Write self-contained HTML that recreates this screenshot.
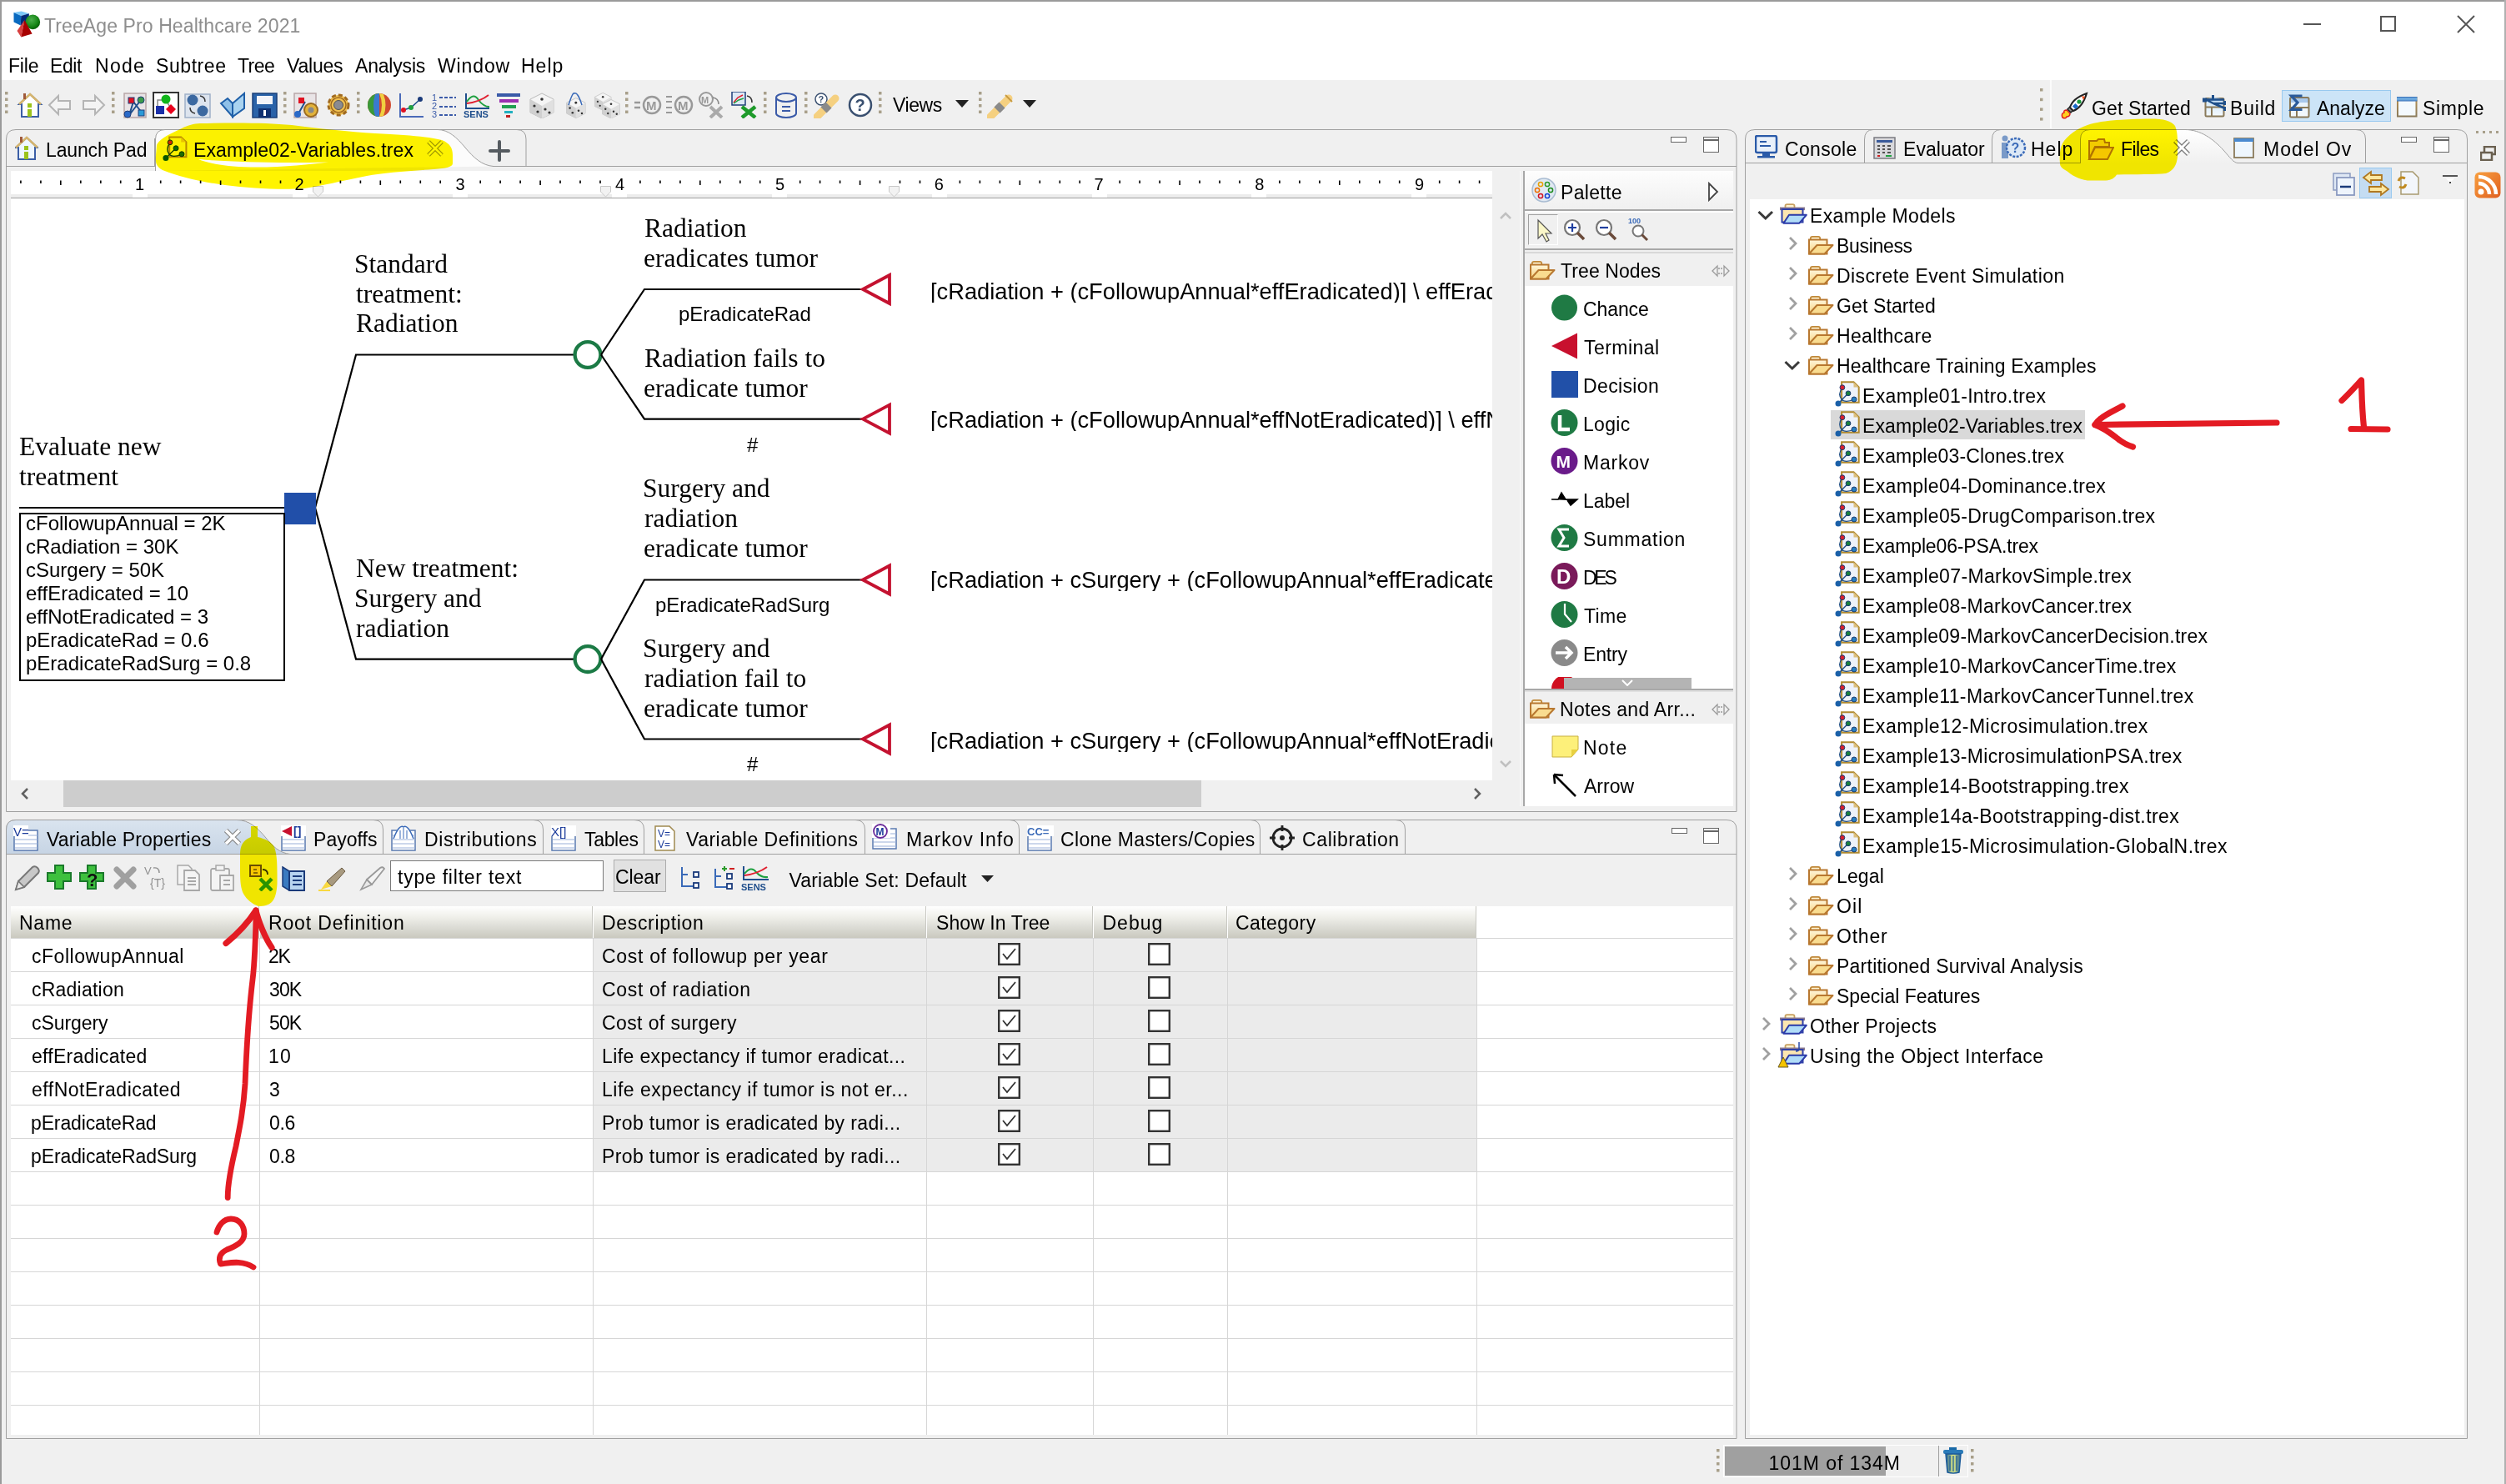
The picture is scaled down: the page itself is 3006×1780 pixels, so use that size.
<!DOCTYPE html><html><head><meta charset="utf-8"><style>
html,body{margin:0;padding:0;}
body{width:3006px;height:1780px;overflow:hidden;position:relative;background:#f0f0f0;font-family:"Liberation Sans", sans-serif;}
.t{position:absolute;white-space:pre;}
.r{position:absolute;}
</style></head><body>
<div class="r" style="left:0px;top:0px;width:3006px;height:96px;background:#fff;"></div>
<div class="r" style="left:0px;top:0px;width:3006px;height:1.5px;background:#9a9a9a;"></div>
<div class="r" style="left:0px;top:0px;width:2px;height:1780px;background:#9a9a9a;"></div>
<div class="r" style="left:3004px;top:0px;width:2px;height:1780px;background:#b0b0b0;"></div>
<div class="t" style="left:53.0px;top:20.3px;font-size:23px;line-height:23px;color:#8e8e8e;letter-spacing:0.10px;">TreeAge Pro Healthcare 2021</div>
<svg class="r" style="left:0px;top:0px;" width="60" height="50" viewBox="0 0 60 50"><defs><radialGradient id="sph" cx="0.4" cy="0.35" r="0.7"><stop offset="0" stop-color="#4cae4c"/><stop offset="0.6" stop-color="#1a8a1a"/><stop offset="1" stop-color="#005a00"/></radialGradient></defs><polygon points="16.5,15.1 25.6,13.4 34.9,16.2 25.3,19" fill="#7cc8f8"/><polygon points="16.5,15.1 25.3,19 24.7,30.6 16.5,26.4" fill="#0a6ac0"/><polygon points="25.3,19 34.9,16.2 34.6,25 24.7,30.6" fill="#002a78"/><circle cx="39.3" cy="26.4" r="8.8" fill="url(#sph)"/><polygon points="29.5,24.1 20.5,37.1 25.3,44.5" fill="#d84040"/><polygon points="29.5,24.1 25.3,44.5 38.6,40.5" fill="#a80000"/></svg>
<div class="r" style="left:2763px;top:28px;width:21px;height:2px;background:#555;"></div>
<div class="r" style="left:2855px;top:19px;width:19px;height:19px;border:2px solid #555;box-sizing:border-box;"></div>
<svg class="r" style="left:2946px;top:17px;" width="24" height="24" viewBox="0 0 24 24"><path d="M2 2 L22 22 M22 2 L2 22" stroke="#555" stroke-width="2"/></svg>
<div class="t" style="left:10.0px;top:68.3px;font-size:23px;line-height:23px;color:#000;letter-spacing:-0.19px;">File</div>
<div class="t" style="left:60.0px;top:68.3px;font-size:23px;line-height:23px;color:#000;letter-spacing:-0.45px;">Edit</div>
<div class="t" style="left:114.0px;top:68.3px;font-size:23px;line-height:23px;color:#000;letter-spacing:1.27px;">Node</div>
<div class="t" style="left:187.0px;top:68.3px;font-size:23px;line-height:23px;color:#000;letter-spacing:0.57px;">Subtree</div>
<div class="t" style="left:285.0px;top:68.3px;font-size:23px;line-height:23px;color:#000;letter-spacing:-0.58px;">Tree</div>
<div class="t" style="left:344.0px;top:68.3px;font-size:23px;line-height:23px;color:#000;letter-spacing:-0.22px;">Values</div>
<div class="t" style="left:426.0px;top:68.3px;font-size:23px;line-height:23px;color:#000;letter-spacing:-0.19px;">Analysis</div>
<div class="t" style="left:525.0px;top:68.3px;font-size:23px;line-height:23px;color:#000;letter-spacing:0.88px;">Window</div>
<div class="t" style="left:625.0px;top:68.3px;font-size:23px;line-height:23px;color:#000;letter-spacing:1.00px;">Help</div>
<!--TOOLBAR-->
<svg class="r" style="left:6px;top:110px;" width="4" height="34" viewBox="0 0 4 34"><rect x="0" y="0.0" width="3.5" height="3.5" fill="#a89f8a"/><rect x="0" y="7.5" width="3.5" height="3.5" fill="#a89f8a"/><rect x="0" y="15.0" width="3.5" height="3.5" fill="#a89f8a"/><rect x="0" y="22.5" width="3.5" height="3.5" fill="#a89f8a"/></svg>
<svg class="r" style="left:134px;top:110px;" width="4" height="34" viewBox="0 0 4 34"><rect x="0" y="0.0" width="3.5" height="3.5" fill="#a89f8a"/><rect x="0" y="7.5" width="3.5" height="3.5" fill="#a89f8a"/><rect x="0" y="15.0" width="3.5" height="3.5" fill="#a89f8a"/><rect x="0" y="22.5" width="3.5" height="3.5" fill="#a89f8a"/></svg>
<svg class="r" style="left:340px;top:110px;" width="4" height="34" viewBox="0 0 4 34"><rect x="0" y="0.0" width="3.5" height="3.5" fill="#a89f8a"/><rect x="0" y="7.5" width="3.5" height="3.5" fill="#a89f8a"/><rect x="0" y="15.0" width="3.5" height="3.5" fill="#a89f8a"/><rect x="0" y="22.5" width="3.5" height="3.5" fill="#a89f8a"/></svg>
<svg class="r" style="left:428px;top:110px;" width="4" height="34" viewBox="0 0 4 34"><rect x="0" y="0.0" width="3.5" height="3.5" fill="#a89f8a"/><rect x="0" y="7.5" width="3.5" height="3.5" fill="#a89f8a"/><rect x="0" y="15.0" width="3.5" height="3.5" fill="#a89f8a"/><rect x="0" y="22.5" width="3.5" height="3.5" fill="#a89f8a"/></svg>
<svg class="r" style="left:750px;top:110px;" width="4" height="34" viewBox="0 0 4 34"><rect x="0" y="0.0" width="3.5" height="3.5" fill="#a89f8a"/><rect x="0" y="7.5" width="3.5" height="3.5" fill="#a89f8a"/><rect x="0" y="15.0" width="3.5" height="3.5" fill="#a89f8a"/><rect x="0" y="22.5" width="3.5" height="3.5" fill="#a89f8a"/></svg>
<svg class="r" style="left:916px;top:110px;" width="4" height="34" viewBox="0 0 4 34"><rect x="0" y="0.0" width="3.5" height="3.5" fill="#a89f8a"/><rect x="0" y="7.5" width="3.5" height="3.5" fill="#a89f8a"/><rect x="0" y="15.0" width="3.5" height="3.5" fill="#a89f8a"/><rect x="0" y="22.5" width="3.5" height="3.5" fill="#a89f8a"/></svg>
<svg class="r" style="left:965px;top:110px;" width="4" height="34" viewBox="0 0 4 34"><rect x="0" y="0.0" width="3.5" height="3.5" fill="#a89f8a"/><rect x="0" y="7.5" width="3.5" height="3.5" fill="#a89f8a"/><rect x="0" y="15.0" width="3.5" height="3.5" fill="#a89f8a"/><rect x="0" y="22.5" width="3.5" height="3.5" fill="#a89f8a"/></svg>
<svg class="r" style="left:1054px;top:110px;" width="4" height="34" viewBox="0 0 4 34"><rect x="0" y="0.0" width="3.5" height="3.5" fill="#a89f8a"/><rect x="0" y="7.5" width="3.5" height="3.5" fill="#a89f8a"/><rect x="0" y="15.0" width="3.5" height="3.5" fill="#a89f8a"/><rect x="0" y="22.5" width="3.5" height="3.5" fill="#a89f8a"/></svg>
<svg class="r" style="left:1174px;top:110px;" width="4" height="34" viewBox="0 0 4 34"><rect x="0" y="0.0" width="3.5" height="3.5" fill="#a89f8a"/><rect x="0" y="7.5" width="3.5" height="3.5" fill="#a89f8a"/><rect x="0" y="15.0" width="3.5" height="3.5" fill="#a89f8a"/><rect x="0" y="22.5" width="3.5" height="3.5" fill="#a89f8a"/></svg>
<svg class="r" style="left:20px;top:110px;" width="32" height="32" viewBox="0 0 32 32"><polygon points="16,3 29,15 26,15 26,30 6,30 6,15 3,15" fill="#fff" stroke="#3b5ea6" stroke-width="2"/><path d="M3 15 L16 3 L29 15" fill="none" stroke="#d6b56e" stroke-width="2.5"/><rect x="13" y="14" width="5" height="5" fill="#9bc21c"/><rect x="13" y="21" width="5" height="9" fill="#9bc21c"/><rect x="8" y="2" width="3" height="7" fill="#a05a3a"/></svg>
<svg class="r" style="left:56px;top:110px;" width="32" height="32" viewBox="0 0 32 32"><path d="M3 16 L14 5 L14 11 L28 11 L28 21 L14 21 L14 27 Z" fill="#f4f4f4" stroke="#b5b5b5" stroke-width="2"/></svg>
<svg class="r" style="left:96px;top:110px;" width="32" height="32" viewBox="0 0 32 32"><path d="M29 16 L18 5 L18 11 L4 11 L4 21 L18 21 L18 27 Z" fill="#f4f4f4" stroke="#b5b5b5" stroke-width="2"/></svg>
<svg class="r" style="left:148px;top:110px;" width="32" height="32" viewBox="0 0 32 32"><rect x="1" y="2" width="26" height="29" fill="#e9e4e6" stroke="#b8a6a8" stroke-width="1.5"/><path d="M7 28 L21 10 M7 28 L12 12 M12 12 L22 25" stroke="#1f4e8c" stroke-width="2"/><rect x="6" y="7" width="7" height="7" fill="#e01020" stroke="#1f3f7a"/><circle cx="21" cy="10" r="4" fill="#3b9a4a" stroke="#1f3f7a"/><rect x="18" y="22" width="7" height="7" fill="#2a9ad8" stroke="#1f3f7a"/><circle cx="5" cy="27" r="4" fill="#2a6ac8" stroke="#1f3f7a"/></svg>
<svg class="r" style="left:183px;top:110px;" width="32" height="32" viewBox="0 0 32 32"><rect x="1" y="1" width="30" height="30" fill="#fff" stroke="#333" stroke-width="2"/><path d="M6 24 L6 10 L16 10 L22 20" stroke="#888" stroke-width="1.5" fill="none"/><circle cx="16" cy="9" r="5.5" fill="#11b51a"/><rect x="4" y="17" width="10" height="10" fill="#1a2fa8"/><polygon points="22,15 28,21 22,27 16,21" fill="#e8001c"/></svg>
<svg class="r" style="left:221px;top:110px;" width="32" height="32" viewBox="0 0 32 32"><rect x="1" y="3" width="30" height="28" fill="#dde4ee" stroke="#9fb0c8" stroke-width="1.5"/><circle cx="10" cy="10" r="6.5" fill="#3b68a0"/><circle cx="22" cy="23" r="6.5" fill="#3b68a0"/><path d="M19 5 Q25 6 25 12 M13 26 Q7 25 7 19" stroke="#333" stroke-width="1.5" fill="none"/></svg>
<svg class="r" style="left:263px;top:110px;" width="32" height="32" viewBox="0 0 32 32"><path d="M2 14 L10 8 L16 14 L16 30 Z" fill="#8fc0e8" stroke="#1f5fa8" stroke-width="2"/><path d="M16 14 L30 2 L30 20 L16 30 Z" fill="#a9d3f0" stroke="#1f5fa8" stroke-width="2"/></svg>
<svg class="r" style="left:301px;top:110px;" width="32" height="32" viewBox="0 0 32 32"><rect x="2" y="2" width="29" height="29" fill="#2a62a8" stroke="#1a3f78" stroke-width="1.5"/><rect x="7" y="5" width="19" height="10" fill="#f3f3f8"/><rect x="9" y="20" width="15" height="11" fill="#0f3070"/><rect x="15" y="22" width="3" height="7" fill="#fff"/></svg>
<svg class="r" style="left:352px;top:110px;" width="32" height="32" viewBox="0 0 32 32"><rect x="1" y="2" width="26" height="29" fill="#e9e4e6" stroke="#b8a6a8" stroke-width="1.5"/><path d="M5 28 L14 12" stroke="#1f4e8c" stroke-width="2"/><rect x="6" y="7" width="7" height="7" fill="#e01020"/><circle cx="5" cy="27" r="4" fill="#2a6ac8"/><circle cx="21" cy="22" r="8" fill="#e2b23a" stroke="#9a6a20" stroke-width="2"/><circle cx="21" cy="22" r="3.5" fill="#888"/></svg>
<svg class="r" style="left:390px;top:110px;" width="32" height="32" viewBox="0 0 32 32"><circle cx="16" cy="16" r="12" fill="#f0c050" stroke="#a06a20" stroke-width="3" stroke-dasharray="5 3"/><circle cx="16" cy="16" r="9" fill="#f0c050" stroke="#a06a20" stroke-width="1.5"/><circle cx="16" cy="16" r="5.5" fill="#8a8a90" stroke="#555"/></svg>
<svg class="r" style="left:439px;top:110px;" width="32" height="32" viewBox="0 0 32 32"><circle cx="16" cy="16" r="14" fill="#d04a30"/><path d="M16 2 A14 14 0 0 0 16 30 Z" fill="#3a9a3a"/><path d="M11 3 Q7 16 11 29 L16 30 L16 2 Z" fill="#3a7ad0"/><path d="M16 2 Q22 16 16 30 L21 29 Q26 16 21 3 Z" fill="#f0d040"/></svg>
<svg class="r" style="left:477px;top:110px;" width="32" height="32" viewBox="0 0 32 32"><path d="M3 2 L3 30 L31 30" stroke="#4a6ab8" stroke-width="2" fill="none"/><path d="M7 22 L16 19 L27 9" stroke="#1f4e8c" stroke-width="1.5" fill="none"/><circle cx="7" cy="22" r="3" fill="#e01020"/><circle cx="16" cy="19" r="3" fill="#20a040"/><circle cx="27" cy="9" r="3" fill="#1a3a7a"/></svg>
<svg class="r" style="left:518px;top:110px;" width="32" height="32" viewBox="0 0 32 32"><text x="0" y="11" font-size="11" fill="#3a5aa8" font-family="Liberation Sans">1</text><text x="0" y="21" font-size="11" fill="#3a5aa8" font-family="Liberation Sans">2</text><text x="0" y="31" font-size="11" fill="#3a5aa8" font-family="Liberation Sans">3</text><path d="M9 7 H29 M9 18 H29 M9 28 H29" stroke="#3a5aa8" stroke-width="2" stroke-dasharray="4 2"/></svg>
<svg class="r" style="left:556px;top:110px;" width="32" height="32" viewBox="0 0 32 32"><path d="M3 2 L3 20 L31 20" stroke="#1f4e8c" stroke-width="2" fill="none"/><path d="M4 12 Q12 0 18 10 Q24 18 31 18" stroke="#20a040" stroke-width="2" fill="none"/><path d="M4 14 Q20 12 30 4" stroke="#e02030" stroke-width="2" fill="none"/><text x="0" y="31" font-size="11" font-weight="bold" fill="#1f4e8c" font-family="Liberation Sans">SENS</text></svg>
<svg class="r" style="left:595px;top:110px;" width="32" height="32" viewBox="0 0 32 32"><rect x="1" y="2" width="28" height="4" fill="#3a5aa8"/><rect x="4" y="9" width="23" height="4" fill="#9a30b0"/><rect x="7" y="16" width="17" height="4" fill="#20a050"/><rect x="10" y="23" width="10" height="3" fill="#20b0c0"/><rect x="12" y="28" width="5" height="3" fill="#c02020"/></svg>
<svg class="r" style="left:634px;top:110px;" width="32" height="32" viewBox="0 0 32 32"><polygon points="16,2 30,9 30,25 16,32 2,25 2,9" fill="#f5f5f5" stroke="#bbb"/><polygon points="16,17 30,9 30,25 16,32" fill="#e0e0e0"/><polygon points="16,17 2,9 2,25 16,32" fill="#d0d0d0"/><circle cx="16" cy="9" r="1.8" fill="#333"/><circle cx="7" cy="17" r="1.6" fill="#333"/><circle cx="11" cy="24" r="1.6" fill="#333"/><circle cx="20" cy="21" r="1.6" fill="#333"/><circle cx="25" cy="25" r="1.6" fill="#333"/></svg>
<svg class="r" style="left:676px;top:110px;" width="32" height="32" viewBox="0 0 32 32"><g transform="translate(2,6) scale(0.8)"><polygon points="16,2 30,9 30,25 16,32 2,25 2,9" fill="#f5f5f5" stroke="#bbb"/><polygon points="16,17 30,9 30,25 16,32" fill="#e0e0e0"/><polygon points="16,17 2,9 2,25 16,32" fill="#d0d0d0"/><circle cx="16" cy="9" r="1.8" fill="#333"/><circle cx="7" cy="17" r="1.6" fill="#333"/><circle cx="11" cy="24" r="1.6" fill="#333"/><circle cx="20" cy="21" r="1.6" fill="#333"/><circle cx="25" cy="25" r="1.6" fill="#333"/></g><path d="M6 16 Q11 0 13 2 Q17 0 22 16" stroke="#3a6ab8" stroke-width="1.5" fill="none"/></svg>
<svg class="r" style="left:712px;top:110px;" width="32" height="32" viewBox="0 0 32 32"><g transform="translate(0,0) scale(0.7)"><polygon points="16,2 30,9 30,25 16,32 2,25 2,9" fill="#f5f5f5" stroke="#bbb"/><polygon points="16,17 30,9 30,25 16,32" fill="#e0e0e0"/><polygon points="16,17 2,9 2,25 16,32" fill="#d0d0d0"/><circle cx="16" cy="9" r="1.8" fill="#333"/><circle cx="7" cy="17" r="1.6" fill="#333"/><circle cx="11" cy="24" r="1.6" fill="#333"/><circle cx="20" cy="21" r="1.6" fill="#333"/><circle cx="25" cy="25" r="1.6" fill="#333"/></g><g transform="translate(9,8) scale(0.75)"><polygon points="16,2 30,9 30,25 16,32 2,25 2,9" fill="#f5f5f5" stroke="#bbb"/><polygon points="16,17 30,9 30,25 16,32" fill="#e0e0e0"/><polygon points="16,17 2,9 2,25 16,32" fill="#d0d0d0"/><circle cx="16" cy="9" r="1.8" fill="#333"/><circle cx="7" cy="17" r="1.6" fill="#333"/><circle cx="11" cy="24" r="1.6" fill="#333"/><circle cx="20" cy="21" r="1.6" fill="#333"/><circle cx="25" cy="25" r="1.6" fill="#333"/></g></svg>
<svg class="r" style="left:760px;top:110px;" width="36" height="32" viewBox="0 0 36 32"><path d="M1 13 H8 M1 19 H8" stroke="#999" stroke-width="2.5"/><circle cx="22" cy="16" r="10" fill="none" stroke="#999" stroke-width="2.5"/><text x="15" y="22" font-size="15" font-weight="bold" fill="#999" font-family="Liberation Sans">M</text></svg>
<svg class="r" style="left:798px;top:110px;" width="36" height="32" viewBox="0 0 36 32"><path d="M1 6 H8 M1 12 H8 M1 19 H8 M1 25 H8" stroke="#999" stroke-width="2"/><circle cx="22" cy="16" r="10" fill="none" stroke="#999" stroke-width="2.5"/><text x="15" y="22" font-size="15" font-weight="bold" fill="#999" font-family="Liberation Sans">M</text></svg>
<svg class="r" style="left:838px;top:110px;" width="32" height="32" viewBox="0 0 32 32"><circle cx="9" cy="9" r="8" fill="none" stroke="#999" stroke-width="2"/><text x="3" y="14" font-size="11" font-weight="bold" fill="#999" font-family="Liberation Sans">M</text><path d="M17 7 Q24 8 24 15" stroke="#888" stroke-width="1.5" fill="none"/><path d="M14 18 L28 31 M28 18 L14 31" stroke="#aaa" stroke-width="4"/></svg>
<svg class="r" style="left:877px;top:110px;" width="32" height="32" viewBox="0 0 32 32"><rect x="1" y="0" width="16" height="16" fill="#dde8f4" stroke="#1f3f7a" stroke-width="1.5"/><path d="M3 13 L8 7 L14 4" stroke="#e02030" stroke-width="1.5" fill="none"/><path d="M3 14 L9 10 L15 8" stroke="#20a040" stroke-width="1.5" fill="none"/><path d="M19 5 Q25 6 25 13" stroke="#333" stroke-width="1.5" fill="none"/><path d="M13 18 L29 31 M29 18 L13 31" stroke="#1e9a2a" stroke-width="4.5"/></svg>
<svg class="r" style="left:929px;top:110px;" width="30" height="32" viewBox="0 0 30 32"><ellipse cx="14" cy="7" rx="12" ry="5" fill="none" stroke="#3a5aa8" stroke-width="2"/><path d="M2 7 V26 A12 5 0 0 0 26 26 V7" fill="none" stroke="#3a5aa8" stroke-width="2"/><path d="M9 18 H19 M9 23 H19" stroke="#3a5aa8" stroke-width="2"/></svg>
<svg class="r" style="left:976px;top:110px;" width="32" height="32" viewBox="0 0 32 32"><circle cx="9" cy="9" r="7" fill="#fff" stroke="#3a5070" stroke-width="1.5"/><text x="5.5" y="13" font-size="11" font-weight="bold" fill="#3a5070" font-family="Liberation Sans">?</text><path d="M4 30 L26 8" stroke="#f5d080" stroke-width="9" stroke-linecap="round"/><path d="M12 22 L18 16" stroke="#8a8a8a" stroke-width="10"/></svg>
<svg class="r" style="left:1016px;top:110px;" width="32" height="32" viewBox="0 0 32 32"><circle cx="16" cy="16" r="13" fill="#fff" stroke="#3a5070" stroke-width="2.5"/><text x="9.5" y="23" font-size="20" font-weight="bold" fill="#3a5070" font-family="Liberation Sans">?</text></svg>
<div class="t" style="left:1071.0px;top:115.3px;font-size:23px;line-height:23px;color:#000;letter-spacing:-0.43px;">Views</div>
<svg class="r" style="left:1146px;top:120px;" width="16" height="10" viewBox="0 0 16 10"><polygon points="0,0 16,0 8,9" fill="#222"/></svg>
<svg class="r" style="left:1184px;top:110px;" width="34" height="32" viewBox="0 0 34 32"><path d="M4 30 L26 8" stroke="#f5d080" stroke-width="9" stroke-linecap="round"/><path d="M12 22 L18 16" stroke="#8a8a8a" stroke-width="10"/><path d="M22 4 L30 12" stroke="#c89a40" stroke-width="2"/></svg>
<svg class="r" style="left:1227px;top:120px;" width="16" height="10" viewBox="0 0 16 10"><polygon points="0,0 16,0 8,9" fill="#222"/></svg>
<svg class="r" style="left:2447px;top:106px;" width="4" height="50" viewBox="0 0 4 50"><rect x="0" y="0.0" width="3.5" height="3.5" fill="#a89f8a"/><rect x="0" y="11.7" width="3.5" height="3.5" fill="#a89f8a"/><rect x="0" y="23.4" width="3.5" height="3.5" fill="#a89f8a"/><rect x="0" y="35.1" width="3.5" height="3.5" fill="#a89f8a"/></svg>
<div class="r" style="left:2459px;top:96px;width:2px;height:58px;background:#fbfbfb;"></div>
<svg class="r" style="left:2470px;top:108px;" width="36" height="36" viewBox="0 0 36 36"><path d="M4 33 Q2 28 6 27 Q5 24 9 24 L13 28 Q13 32 9 32 Q8 35 4 33 Z" fill="#ffd020" stroke="#e02020" stroke-width="1.5"/><path d="M10 23 L14 27 L17 24 L13 20 Z" fill="#909090" stroke="#222" stroke-width="1.5"/><path d="M13 21 Q16 10 33 4 Q28 21 17 25 Z" fill="#fff" stroke="#222" stroke-width="2"/><rect x="17" y="17" width="5" height="5" fill="#1a6ac8" transform="rotate(45 19.5 19.5)"/><circle cx="24" cy="14" r="2.6" fill="#1a9a3a"/><polygon points="27,7 31,8 29,12" fill="#f05020"/></svg>
<div class="t" style="left:2509.0px;top:119.3px;font-size:23px;line-height:23px;color:#000;letter-spacing:0.12px;">Get Started</div>
<svg class="r" style="left:2640px;top:110px;" width="34" height="34" viewBox="0 0 34 34"><defs><linearGradient id="bt" x1="0" y1="0" x2="0" y2="1"><stop offset="0" stop-color="#cfe6f8"/><stop offset="1" stop-color="#f4f9fd"/></linearGradient></defs><rect x="5.5" y="8" width="22" height="21.5" rx="1.5" fill="url(#bt)" stroke="#8a7a5a" stroke-width="2"/><path d="M5.5 18.5 H27.5 M13 18.5 V29.5" stroke="#8a7a5a" stroke-width="2"/><path d="M4 10 Q16 4 28 10 Q16 13 4 10 Z" fill="#a8cdf0"/><path d="M4 9.5 H28 M6 9.5 L15 14 L29 14 M15 14 L29 20" stroke="#1f4f8a" stroke-width="2.5" fill="none"/><rect x="2" y="7.5" width="5" height="5" fill="#1f4f8a"/><rect x="13" y="4" width="3" height="6" fill="#1f4f8a"/><rect x="27" y="11" width="3" height="5" fill="#1f4f8a"/><rect x="27" y="18" width="3" height="5" fill="#1f4f8a"/></svg>
<div class="t" style="left:2675.0px;top:119.3px;font-size:23px;line-height:23px;color:#000;letter-spacing:0.81px;">Build</div>
<div class="r" style="left:2737px;top:108px;width:131px;height:38px;background:#cce4f7;border:1px solid #99c9ef;box-sizing:border-box;"></div>
<svg class="r" style="left:2744px;top:110px;" width="30" height="34" viewBox="0 0 30 34"><defs><linearGradient id="at" x1="0" y1="0" x2="0" y2="1"><stop offset="0" stop-color="#a8c8ec"/><stop offset="0.25" stop-color="#a8c8ec"/><stop offset="0.26" stop-color="#e8f3fc"/><stop offset="1" stop-color="#f4f9fd"/></linearGradient></defs><rect x="3" y="7" width="22.5" height="23.5" rx="1.5" fill="url(#at)" stroke="#8a7a5a" stroke-width="2"/><path d="M3 19 H25.5 M11 19 V30.5" stroke="#8a7a5a" stroke-width="2"/><path d="M17.5 5 H4.5 L12 13 L4.5 21.5 H17.5" fill="none" stroke="#2a5a9a" stroke-width="3.2"/></svg>
<div class="t" style="left:2779.0px;top:119.3px;font-size:23px;line-height:23px;color:#000;letter-spacing:-0.01px;">Analyze</div>
<svg class="r" style="left:2874px;top:110px;" width="28" height="34" viewBox="0 0 28 34"><defs><linearGradient id="st" x1="0" y1="0" x2="0" y2="1"><stop offset="0" stop-color="#3a70b8"/><stop offset="0.5" stop-color="#7ab8e8"/><stop offset="1" stop-color="#3a70b8"/></linearGradient><linearGradient id="sb" x1="0" y1="0" x2="0" y2="1"><stop offset="0" stop-color="#b89050"/><stop offset="1" stop-color="#8a7a5a"/></linearGradient></defs><rect x="2" y="7" width="22.5" height="22.5" fill="#f4f9fd" stroke="url(#sb)" stroke-width="2"/><rect x="1" y="6" width="24.5" height="5.5" fill="url(#st)"/></svg>
<div class="t" style="left:2906.0px;top:119.3px;font-size:23px;line-height:23px;color:#000;letter-spacing:0.64px;">Simple</div>
<!--EDITOR-->
<svg class="r" style="left:7px;top:155px;" width="2077" height="819" viewBox="0 0 2077 819">
<path d="M0.5 818.5 V12 Q0.5 0.5 12 0.5 H2064 Q2076 0.5 2076 12 V818.5 Z" fill="#f0f0f0" stroke="#a0a0a0" stroke-width="1"/>
</svg>
<svg class="r" style="left:186px;top:155px;" width="410" height="50" viewBox="0 0 410 50">
<path d="M0.5 50 V12 Q0.5 0.5 12 0.5 H339 C 352 0.5, 362 10, 372 22 C 382 34, 392 43.5, 406 44.5" fill="#fcfcfc" stroke="#a0a0a0" stroke-width="1"/>
</svg>
<div class="r" style="left:185px;top:166px;width:1px;height:33px;background:#a0a0a0;"></div>
<div class="r" style="left:7px;top:199px;width:179px;height:1px;background:#a0a0a0;"></div>
<div class="r" style="left:591px;top:199px;width:1492px;height:1px;background:#a0a0a0;"></div>
<svg class="r" style="left:600px;top:155px;" width="33" height="45" viewBox="0 0 33 45"><path d="M0 0.5 H20 Q31 0.5 31 12 V44" fill="none" stroke="#a0a0a0" stroke-width="1"/></svg>
<svg class="r" style="left:18px;top:163px;" width="28" height="30" viewBox="0 0 28 30"><polygon points="14,2 27,14 24,14 24,28 4,28 4,14 1,14" fill="#eef6ff" stroke="#3b5ea6" stroke-width="2"/><path d="M1 14 L14 2 L27 14" fill="none" stroke="#d6b56e" stroke-width="2.5"/><rect x="11" y="12" width="5" height="5" fill="#9bc21c"/><rect x="11" y="19" width="5" height="9" fill="#9bc21c"/><rect x="6" y="1" width="3" height="7" fill="#a05a3a"/></svg>
<div class="t" style="left:55.0px;top:169.3px;font-size:23px;line-height:23px;color:#000;letter-spacing:-0.15px;">Launch Pad</div>
<svg class="r" style="left:190px;top:160px;" width="36" height="36" viewBox="0 0 36 36"><path d="M13.2 4.4 H27.2 L33.4 10.4 V28.3 H13.2 Z" fill="#fbfbf4" stroke="#b8901a" stroke-width="2"/><path d="M27.2 4.4 V10.4 H33.4 Z" fill="#e8cc40"/><path d="M8.9 29.6 L21 17.8 M14 10.8 Q8 19 13.3 25.6 Q18 29.5 28 24.8" fill="none" stroke="#0a3a0a" stroke-width="1.3"/><circle cx="14" cy="10.8" r="2.9" fill="#d02a10" stroke="#0a3a0a" stroke-width="1"/><circle cx="21" cy="17.8" r="3" fill="#107010" stroke="#0a3a0a" stroke-width="1"/><circle cx="28" cy="24.8" r="3" fill="#207010" stroke="#0a3a0a" stroke-width="1"/><circle cx="8.9" cy="29.6" r="3.5" fill="#0a5a0a"/></svg>
<div class="t" style="left:232.0px;top:169.3px;font-size:23px;line-height:23px;color:#000;letter-spacing:0.10px;">Example02-Variables.trex</div>
<svg class="r" style="left:511px;top:167px;" width="22" height="22" viewBox="0 0 22 22"><path d="M3 3 L19 19 M19 3 L3 19" stroke="#9a9a9a" stroke-width="5"/><path d="M3 3 L19 19 M19 3 L3 19" stroke="#fff" stroke-width="2.5"/></svg>
<svg class="r" style="left:586px;top:168px;" width="26" height="26" viewBox="0 0 26 26"><path d="M13 2 V24 M2 13 H24" stroke="#555b60" stroke-width="4" stroke-linecap="round"/></svg>
<div class="r" style="left:2004px;top:164px;width:19px;height:7px;border:1.5px solid #666;box-sizing:border-box;background:#fff;"></div>
<div class="r" style="left:2043px;top:164px;width:19px;height:19px;border:1.5px solid #666;box-sizing:border-box;background:#fff;"></div>
<div class="r" style="left:2043px;top:167px;width:19px;height:1.5px;background:#666;"></div>
<div class="r" style="left:13px;top:205px;width:1777px;height:28px;background:#fff;"></div>
<div class="r" style="left:13px;top:233px;width:1777px;height:4px;background:#ececec;"></div>
<div class="r" style="left:13px;top:237px;width:1777px;height:1px;background:#a0a0a0;"></div>
<svg class="r" style="left:13px;top:205px;" width="1777" height="33" viewBox="0 0 1777 33"><rect x="11.1" y="11.5" width="1.6" height="3.5" fill="#000"/><rect x="35.1" y="11.5" width="1.6" height="3.5" fill="#000"/><rect x="59.0" y="11.5" width="1.6" height="5.5" fill="#000"/><rect x="83.0" y="11.5" width="1.6" height="3.5" fill="#000"/><rect x="107.0" y="11.5" width="1.6" height="3.5" fill="#000"/><rect x="130.9" y="11.5" width="1.6" height="3.5" fill="#000"/><rect x="178.9" y="11.5" width="1.6" height="3.5" fill="#000"/><rect x="202.8" y="11.5" width="1.6" height="3.5" fill="#000"/><rect x="226.8" y="11.5" width="1.6" height="3.5" fill="#000"/><rect x="250.8" y="11.5" width="1.6" height="5.5" fill="#000"/><rect x="274.7" y="11.5" width="1.6" height="3.5" fill="#000"/><rect x="298.7" y="11.5" width="1.6" height="3.5" fill="#000"/><rect x="322.7" y="11.5" width="1.6" height="3.5" fill="#000"/><rect x="370.6" y="11.5" width="1.6" height="3.5" fill="#000"/><rect x="394.6" y="11.5" width="1.6" height="3.5" fill="#000"/><rect x="418.6" y="11.5" width="1.6" height="3.5" fill="#000"/><rect x="442.5" y="11.5" width="1.6" height="5.5" fill="#000"/><rect x="466.5" y="11.5" width="1.6" height="3.5" fill="#000"/><rect x="490.5" y="11.5" width="1.6" height="3.5" fill="#000"/><rect x="514.4" y="11.5" width="1.6" height="3.5" fill="#000"/><rect x="562.4" y="11.5" width="1.6" height="3.5" fill="#000"/><rect x="586.3" y="11.5" width="1.6" height="3.5" fill="#000"/><rect x="610.3" y="11.5" width="1.6" height="3.5" fill="#000"/><rect x="634.3" y="11.5" width="1.6" height="5.5" fill="#000"/><rect x="658.2" y="11.5" width="1.6" height="3.5" fill="#000"/><rect x="682.2" y="11.5" width="1.6" height="3.5" fill="#000"/><rect x="706.2" y="11.5" width="1.6" height="3.5" fill="#000"/><rect x="754.1" y="11.5" width="1.6" height="3.5" fill="#000"/><rect x="778.1" y="11.5" width="1.6" height="3.5" fill="#000"/><rect x="802.1" y="11.5" width="1.6" height="3.5" fill="#000"/><rect x="826.0" y="11.5" width="1.6" height="5.5" fill="#000"/><rect x="850.0" y="11.5" width="1.6" height="3.5" fill="#000"/><rect x="874.0" y="11.5" width="1.6" height="3.5" fill="#000"/><rect x="897.9" y="11.5" width="1.6" height="3.5" fill="#000"/><rect x="945.9" y="11.5" width="1.6" height="3.5" fill="#000"/><rect x="969.8" y="11.5" width="1.6" height="3.5" fill="#000"/><rect x="993.8" y="11.5" width="1.6" height="3.5" fill="#000"/><rect x="1017.8" y="11.5" width="1.6" height="5.5" fill="#000"/><rect x="1041.7" y="11.5" width="1.6" height="3.5" fill="#000"/><rect x="1065.7" y="11.5" width="1.6" height="3.5" fill="#000"/><rect x="1089.7" y="11.5" width="1.6" height="3.5" fill="#000"/><rect x="1137.6" y="11.5" width="1.6" height="3.5" fill="#000"/><rect x="1161.6" y="11.5" width="1.6" height="3.5" fill="#000"/><rect x="1185.6" y="11.5" width="1.6" height="3.5" fill="#000"/><rect x="1209.5" y="11.5" width="1.6" height="5.5" fill="#000"/><rect x="1233.5" y="11.5" width="1.6" height="3.5" fill="#000"/><rect x="1257.5" y="11.5" width="1.6" height="3.5" fill="#000"/><rect x="1281.4" y="11.5" width="1.6" height="3.5" fill="#000"/><rect x="1329.4" y="11.5" width="1.6" height="3.5" fill="#000"/><rect x="1353.3" y="11.5" width="1.6" height="3.5" fill="#000"/><rect x="1377.3" y="11.5" width="1.6" height="3.5" fill="#000"/><rect x="1401.3" y="11.5" width="1.6" height="5.5" fill="#000"/><rect x="1425.2" y="11.5" width="1.6" height="3.5" fill="#000"/><rect x="1449.2" y="11.5" width="1.6" height="3.5" fill="#000"/><rect x="1473.2" y="11.5" width="1.6" height="3.5" fill="#000"/><rect x="1521.1" y="11.5" width="1.6" height="3.5" fill="#000"/><rect x="1545.1" y="11.5" width="1.6" height="3.5" fill="#000"/><rect x="1569.1" y="11.5" width="1.6" height="3.5" fill="#000"/><rect x="1593.0" y="11.5" width="1.6" height="5.5" fill="#000"/><rect x="1617.0" y="11.5" width="1.6" height="3.5" fill="#000"/><rect x="1641.0" y="11.5" width="1.6" height="3.5" fill="#000"/><rect x="1664.9" y="11.5" width="1.6" height="3.5" fill="#000"/><rect x="1712.9" y="11.5" width="1.6" height="3.5" fill="#000"/><rect x="1736.8" y="11.5" width="1.6" height="3.5" fill="#000"/><rect x="1760.8" y="11.5" width="1.6" height="3.5" fill="#000"/></svg>
<div class="r" style="left:159px;top:233px;width:18px;height:4px;background:#fff;"></div>
<div class="t" style="left:161.9px;top:211.1px;font-size:20px;line-height:20px;color:#000;">1</div>
<div class="r" style="left:351px;top:233px;width:18px;height:4px;background:#fff;"></div>
<div class="t" style="left:353.6px;top:211.1px;font-size:20px;line-height:20px;color:#000;">2</div>
<div class="r" style="left:543px;top:233px;width:18px;height:4px;background:#fff;"></div>
<div class="t" style="left:546.4px;top:211.1px;font-size:20px;line-height:20px;color:#000;">3</div>
<div class="r" style="left:734px;top:233px;width:18px;height:4px;background:#fff;"></div>
<div class="t" style="left:738.1px;top:211.1px;font-size:20px;line-height:20px;color:#000;">4</div>
<div class="r" style="left:926px;top:233px;width:18px;height:4px;background:#fff;"></div>
<div class="t" style="left:929.9px;top:211.1px;font-size:20px;line-height:20px;color:#000;">5</div>
<div class="r" style="left:1118px;top:233px;width:18px;height:4px;background:#fff;"></div>
<div class="t" style="left:1120.7px;top:211.1px;font-size:20px;line-height:20px;color:#000;">6</div>
<div class="r" style="left:1310px;top:233px;width:18px;height:4px;background:#fff;"></div>
<div class="t" style="left:1312.4px;top:211.1px;font-size:20px;line-height:20px;color:#000;">7</div>
<div class="r" style="left:1501px;top:233px;width:18px;height:4px;background:#fff;"></div>
<div class="t" style="left:1505.2px;top:211.1px;font-size:20px;line-height:20px;color:#000;">8</div>
<div class="r" style="left:1693px;top:233px;width:18px;height:4px;background:#fff;"></div>
<div class="t" style="left:1696.9px;top:211.1px;font-size:20px;line-height:20px;color:#000;">9</div>
<svg class="r" style="left:375px;top:223px;" width="13" height="14" viewBox="0 0 13 14"><path d="M0.5 0.5 H12.5 V7 L6.5 13 L0.5 7 Z" fill="#f2f2f2" stroke="#c8c8c8" stroke-width="1"/></svg>
<svg class="r" style="left:720px;top:223px;" width="13" height="14" viewBox="0 0 13 14"><path d="M0.5 0.5 H12.5 V7 L6.5 13 L0.5 7 Z" fill="#f2f2f2" stroke="#c8c8c8" stroke-width="1"/></svg>
<svg class="r" style="left:1066px;top:223px;" width="13" height="14" viewBox="0 0 13 14"><path d="M0.5 0.5 H12.5 V7 L6.5 13 L0.5 7 Z" fill="#f2f2f2" stroke="#c8c8c8" stroke-width="1"/></svg>
<div class="r" style="left:13px;top:238px;width:1777px;height:698px;background:#fff;"></div>
<svg class="r" style="left:0px;top:0px;clip-path: inset(238px 0 0 13px);" width="1790" height="936" viewBox="0 0 1790 936"><path d="M23 609 H341" fill="none" stroke="#000" stroke-width="2.2"/><path d="M378 609 L427 425.5 H689" fill="none" stroke="#000" stroke-width="2.2"/><path d="M378 609 L427 790.6 H689" fill="none" stroke="#000" stroke-width="2.2"/><circle cx="705" cy="425.5" r="15.4" fill="#fff" stroke="#1b7a45" stroke-width="4.3"/><path d="M721 425.5 L773 347 H1034" fill="none" stroke="#000" stroke-width="2.2"/><path d="M721 425.5 L773 502.6 H1034" fill="none" stroke="#000" stroke-width="2.2"/><circle cx="705" cy="790.6" r="15.4" fill="#fff" stroke="#1b7a45" stroke-width="4.3"/><path d="M721 790.6 L773 695.5 H1034" fill="none" stroke="#000" stroke-width="2.2"/><path d="M721 790.6 L773 886.5 H1034" fill="none" stroke="#000" stroke-width="2.2"/><rect x="341" y="591" width="38" height="38" fill="#214fa9"/><rect x="24" y="616" width="317" height="200" fill="none" stroke="#000" stroke-width="2"/><polygon points="1035,347 1067,330.0 1067,364.0" fill="#fff" stroke="#c41230" stroke-width="3.8"/><polygon points="1035,502.6 1067,485.6 1067,519.6" fill="#fff" stroke="#c41230" stroke-width="3.8"/><polygon points="1035,695.5 1067,678.5 1067,712.5" fill="#fff" stroke="#c41230" stroke-width="3.8"/><polygon points="1035,886.5 1067,869.5 1067,903.5" fill="#fff" stroke="#c41230" stroke-width="3.8"/></svg>
<div class="t" style="left:23.0px;top:519.6px;font-size:31.5px;line-height:31.5px;color:#000;font-family:'Liberation Serif', serif;">Evaluate new</div>
<div class="t" style="left:23.0px;top:555.6px;font-size:31.5px;line-height:31.5px;color:#000;font-family:'Liberation Serif', serif;">treatment</div>
<div class="t" style="left:31.0px;top:615.7px;font-size:24px;line-height:24px;color:#000;">cFollowupAnnual = 2K</div>
<div class="t" style="left:31.0px;top:643.7px;font-size:24px;line-height:24px;color:#000;">cRadiation = 30K</div>
<div class="t" style="left:31.0px;top:671.7px;font-size:24px;line-height:24px;color:#000;">cSurgery = 50K</div>
<div class="t" style="left:31.0px;top:699.7px;font-size:24px;line-height:24px;color:#000;">effEradicated = 10</div>
<div class="t" style="left:31.0px;top:727.7px;font-size:24px;line-height:24px;color:#000;">effNotEradicated = 3</div>
<div class="t" style="left:31.0px;top:755.7px;font-size:24px;line-height:24px;color:#000;">pEradicateRad = 0.6</div>
<div class="t" style="left:31.0px;top:783.7px;font-size:24px;line-height:24px;color:#000;">pEradicateRadSurg = 0.8</div>
<div class="t" style="left:425.0px;top:300.6px;font-size:31.5px;line-height:31.5px;color:#000;font-family:'Liberation Serif', serif;">Standard</div>
<div class="t" style="left:427.0px;top:336.6px;font-size:31.5px;line-height:31.5px;color:#000;font-family:'Liberation Serif', serif;">treatment:</div>
<div class="t" style="left:427.0px;top:372.1px;font-size:31.5px;line-height:31.5px;color:#000;font-family:'Liberation Serif', serif;">Radiation</div>
<div class="t" style="left:427.0px;top:666.1px;font-size:31.5px;line-height:31.5px;color:#000;font-family:'Liberation Serif', serif;">New treatment:</div>
<div class="t" style="left:425.0px;top:702.0px;font-size:31.5px;line-height:31.5px;color:#000;font-family:'Liberation Serif', serif;">Surgery and</div>
<div class="t" style="left:427.0px;top:737.9px;font-size:31.5px;line-height:31.5px;color:#000;font-family:'Liberation Serif', serif;">radiation</div>
<div class="t" style="left:773.0px;top:257.6px;font-size:31.5px;line-height:31.5px;color:#000;font-family:'Liberation Serif', serif;">Radiation</div>
<div class="t" style="left:772.0px;top:293.6px;font-size:31.5px;line-height:31.5px;color:#000;font-family:'Liberation Serif', serif;">eradicates tumor</div>
<div class="t" style="left:773.0px;top:413.6px;font-size:31.5px;line-height:31.5px;color:#000;font-family:'Liberation Serif', serif;">Radiation fails to</div>
<div class="t" style="left:772.0px;top:449.6px;font-size:31.5px;line-height:31.5px;color:#000;font-family:'Liberation Serif', serif;">eradicate tumor</div>
<div class="t" style="left:771.0px;top:569.6px;font-size:31.5px;line-height:31.5px;color:#000;font-family:'Liberation Serif', serif;">Surgery and</div>
<div class="t" style="left:773.0px;top:605.6px;font-size:31.5px;line-height:31.5px;color:#000;font-family:'Liberation Serif', serif;">radiation</div>
<div class="t" style="left:772.0px;top:641.6px;font-size:31.5px;line-height:31.5px;color:#000;font-family:'Liberation Serif', serif;">eradicate tumor</div>
<div class="t" style="left:771.0px;top:761.6px;font-size:31.5px;line-height:31.5px;color:#000;font-family:'Liberation Serif', serif;">Surgery and</div>
<div class="t" style="left:773.0px;top:797.6px;font-size:31.5px;line-height:31.5px;color:#000;font-family:'Liberation Serif', serif;">radiation fail to</div>
<div class="t" style="left:772.0px;top:833.6px;font-size:31.5px;line-height:31.5px;color:#000;font-family:'Liberation Serif', serif;">eradicate tumor</div>
<div class="t" style="left:814.0px;top:365.2px;font-size:24px;line-height:24px;color:#000;">pEradicateRad</div>
<div class="t" style="left:786.0px;top:714.1px;font-size:24px;line-height:24px;color:#000;">pEradicateRadSurg</div>
<div class="t" style="left:896.0px;top:521.7px;font-size:24px;line-height:24px;color:#000;">#</div>
<div class="t" style="left:896.0px;top:904.7px;font-size:24px;line-height:24px;color:#000;">#</div>
<div class="t" style="left:1116.0px;top:335.9px;font-size:27.25px;line-height:27.25px;color:#000;width:674.0px;overflow:hidden;">[cRadiation + (cFollowupAnnual*effEradicated)] \ effEradicated</div>
<div class="t" style="left:1116.0px;top:489.5px;font-size:27.25px;line-height:27.25px;color:#000;width:674.0px;overflow:hidden;">[cRadiation + (cFollowupAnnual*effNotEradicated)] \ effNotEradicated</div>
<div class="t" style="left:1116.0px;top:681.9px;font-size:27.25px;line-height:27.25px;color:#000;width:674.0px;overflow:hidden;">[cRadiation + cSurgery + (cFollowupAnnual*effEradicated)] \ effEradicated</div>
<div class="t" style="left:1116.0px;top:874.5px;font-size:27.25px;line-height:27.25px;color:#000;width:674.0px;overflow:hidden;">[cRadiation + cSurgery + (cFollowupAnnual*effNotEradicated)] \ effNotEradicated</div>
<div class="r" style="left:13px;top:936px;width:1777px;height:32px;background:#f0f0f0;"></div>
<div class="r" style="left:76px;top:936px;width:1365px;height:32px;background:#cdcdcd;"></div>
<svg class="r" style="left:22px;top:944px;" width="16" height="16" viewBox="0 0 16 16"><path d="M11 2 L5 8 L11 14" fill="none" stroke="#606060" stroke-width="2.5"/></svg>
<svg class="r" style="left:1764px;top:944px;" width="16" height="16" viewBox="0 0 16 16"><path d="M5 2 L11 8 L5 14" fill="none" stroke="#606060" stroke-width="2.5"/></svg>
<div class="r" style="left:1790px;top:205px;width:33px;height:763px;background:#f0f0f0;"></div>
<svg class="r" style="left:1798px;top:251px;" width="16" height="14" viewBox="0 0 16 14"><path d="M2 11 L8 5 L14 11" fill="none" stroke="#c0c0c0" stroke-width="2.5"/></svg>
<svg class="r" style="left:1798px;top:910px;" width="16" height="14" viewBox="0 0 16 14"><path d="M2 3 L8 9 L14 3" fill="none" stroke="#c0c0c0" stroke-width="2.5"/></svg>
<!--PALETTE-->
<div class="r" style="left:1823px;top:205px;width:1px;height:762px;background:#fafafa;"></div>
<div class="r" style="left:1827px;top:205px;width:2px;height:762px;background:#a8a8a8;"></div>
<div class="r" style="left:1829px;top:205px;width:250px;height:46px;background:linear-gradient(#fdfdfd,#f0f0f0);"></div>
<svg class="r" style="left:1837px;top:213px;" width="32" height="32" viewBox="0 0 32 32"><circle cx="15" cy="15" r="14" fill="#dfe8f2" stroke="#a9bcd2" stroke-width="1.5"/><circle cx="11" cy="8" r="2.6" fill="none" stroke="#e8a000" stroke-width="1.5"/><circle cx="19" cy="8" r="2.6" fill="none" stroke="#2a9a2a" stroke-width="1.5"/><circle cx="7" cy="15" r="2.6" fill="none" stroke="#f07000" stroke-width="1.5"/><circle cx="23" cy="15" r="2.6" fill="none" stroke="#1a8a1a" stroke-width="1.5"/><circle cx="11" cy="22" r="2.6" fill="none" stroke="#d01020" stroke-width="1.5"/><circle cx="19" cy="22" r="2.6" fill="none" stroke="#1040d0" stroke-width="1.5"/></svg>
<div class="t" style="left:1872.0px;top:220.3px;font-size:23px;line-height:23px;color:#000;letter-spacing:0.31px;">Palette</div>
<svg class="r" style="left:2048px;top:218px;" width="14" height="24" viewBox="0 0 14 24"><path d="M2 2 L12 12 L2 22 Z" fill="#fff" stroke="#444" stroke-width="1.8"/></svg>
<div class="r" style="left:1829px;top:251px;width:250px;height:1.5px;background:#a8a8a8;"></div>
<div class="r" style="left:1829px;top:253px;width:250px;height:1.5px;background:#fff;"></div>
<div class="r" style="left:1833px;top:257px;width:36px;height:37px;border:1px solid #a0a0a0;border-right-color:#fff;border-bottom-color:#fff;box-sizing:border-box;"></div>
<svg class="r" style="left:1843px;top:262px;" width="20" height="30" viewBox="0 0 20 30"><path d="M2 2 L2 24 L7 19 L12 28 L15 26 L11 18 L18 18 Z" fill="#fbf7c8" stroke="#555" stroke-width="1.2"/></svg>
<svg class="r" style="left:1875px;top:262px;" width="28" height="28" viewBox="0 0 28 28"><circle cx="11" cy="11" r="9" fill="#fff" stroke="#777" stroke-width="2.2"/><path d="M17 17 L25 25" stroke="#6a4a3a" stroke-width="3.5"/><path d="M6 11 H16 M11 6 V16" stroke="#2040a0" stroke-width="2.2"/></svg>
<svg class="r" style="left:1913px;top:262px;" width="28" height="28" viewBox="0 0 28 28"><circle cx="11" cy="11" r="9" fill="#fff" stroke="#777" stroke-width="2.2"/><path d="M17 17 L25 25" stroke="#6a4a3a" stroke-width="3.5"/><path d="M6 11 H16" stroke="#2040a0" stroke-width="2.2"/></svg>
<svg class="r" style="left:1951px;top:259px;" width="32" height="32" viewBox="0 0 32 32"><text x="2" y="9" font-size="9" font-weight="bold" fill="#3a6ab8" font-family="Liberation Sans">100</text><circle cx="14" cy="18" r="6.5" fill="#fff" stroke="#777" stroke-width="2"/><path d="M18.5 22.5 L25 29" stroke="#6a4a3a" stroke-width="3"/></svg>
<div class="r" style="left:1829px;top:298px;width:250px;height:1.5px;background:#a8a8a8;"></div>
<div class="r" style="left:1829px;top:302px;width:250px;height:1.5px;background:#d8d8d8;"></div>
<div class="r" style="left:1829px;top:304px;width:250px;height:39px;background:#f0f0f0;"></div>
<svg class="r" style="left:1834px;top:311px;" width="32" height="30" viewBox="0 0 32 30"><defs><linearGradient id="fo" x1="0" y1="0" x2="0" y2="1"><stop offset="0" stop-color="#fff6dc"/><stop offset="1" stop-color="#f6d27a"/></linearGradient></defs><path d="M3.8 7 V4.8 Q3.8 2.8 6 2.8 H13 Q15.2 2.8 15.2 4.8 V7" fill="#fff3d0" stroke="#c08838" stroke-width="1.8"/><rect x="2" y="6.5" width="21.5" height="17" fill="url(#fo)" stroke="#b87830" stroke-width="2"/><path d="M2 23.5 L11.5 13 H30.5 L20.5 23.5 Z" fill="#f9dc90" stroke="#b87830" stroke-width="2" stroke-linejoin="round"/></svg>
<div class="t" style="left:1872.0px;top:313.8px;font-size:23px;line-height:23px;color:#000;letter-spacing:0.08px;">Tree Nodes</div>
<svg class="r" style="left:2053px;top:317px;" width="22" height="16" viewBox="0 0 22 16"><path d="M1 8 L7 2 V14 Z M21 8 L15 2 V14 Z" fill="none" stroke="#9a9a9a" stroke-width="1.3"/><path d="M8 5 H14 M8 11 H14" stroke="#9a9a9a" stroke-width="1.3" stroke-dasharray="2 1"/></svg>
<div class="r" style="left:1829px;top:343px;width:250px;height:484px;background:#fff;"></div>
<div class="t" style="left:1899.0px;top:359.8px;font-size:23px;line-height:23px;color:#000;letter-spacing:-0.10px;">Chance</div>
<div class="t" style="left:1900.0px;top:405.8px;font-size:23px;line-height:23px;color:#000;letter-spacing:0.46px;">Terminal</div>
<div class="t" style="left:1899.0px;top:451.8px;font-size:23px;line-height:23px;color:#000;letter-spacing:0.37px;">Decision</div>
<div class="t" style="left:1899.0px;top:497.8px;font-size:23px;line-height:23px;color:#000;letter-spacing:0.30px;">Logic</div>
<div class="t" style="left:1899.0px;top:543.8px;font-size:23px;line-height:23px;color:#000;letter-spacing:0.78px;">Markov</div>
<div class="t" style="left:1899.0px;top:589.8px;font-size:23px;line-height:23px;color:#000;letter-spacing:-0.04px;">Label</div>
<div class="t" style="left:1899.0px;top:635.8px;font-size:23px;line-height:23px;color:#000;letter-spacing:0.76px;">Summation</div>
<div class="t" style="left:1899.0px;top:681.8px;font-size:23px;line-height:23px;color:#000;letter-spacing:-3.28px;">DES</div>
<div class="t" style="left:1900.0px;top:727.8px;font-size:23px;line-height:23px;color:#000;letter-spacing:0.31px;">Time</div>
<div class="t" style="left:1899.0px;top:773.8px;font-size:23px;line-height:23px;color:#000;letter-spacing:-0.15px;">Entry</div>
<svg class="r" style="left:1860px;top:353px;" width="34" height="33" viewBox="0 0 34 33"><circle cx="16.5" cy="16" r="15.5" fill="#1f7a44"/></svg>
<svg class="r" style="left:1860px;top:399px;" width="34" height="33" viewBox="0 0 34 33"><polygon points="1,16 32,0.5 32,31.5" fill="#c8102e"/></svg>
<svg class="r" style="left:1860px;top:445px;" width="34" height="33" viewBox="0 0 34 33"><rect x="1" y="0" width="32" height="32" fill="#2150a8"/></svg>
<svg class="r" style="left:1860px;top:491px;" width="34" height="33" viewBox="0 0 34 33"><circle cx="16.5" cy="16" r="16" fill="#1f7a44"/><path d="M11 7 V24 H23" fill="none" stroke="#fff" stroke-width="4.5"/></svg>
<svg class="r" style="left:1860px;top:537px;" width="34" height="33" viewBox="0 0 34 33"><circle cx="16.5" cy="16" r="16" fill="#6a1b8a"/><text x="6.5" y="24" font-size="21" font-weight="bold" fill="#fff" font-family="Liberation Sans">M</text></svg>
<svg class="r" style="left:1860px;top:583px;" width="34" height="33" viewBox="0 0 34 33"><path d="M1 16 H9 L13 8 L18 16 H32 L24 23 L20 17" fill="#000" stroke="#000" stroke-width="1.5"/></svg>
<svg class="r" style="left:1860px;top:629px;" width="34" height="33" viewBox="0 0 34 33"><circle cx="16.5" cy="16" r="16" fill="#1f7a44"/><path d="M22 6 H10 L16 16 L10 26 H22" fill="none" stroke="#fff" stroke-width="3"/></svg>
<svg class="r" style="left:1860px;top:675px;" width="34" height="33" viewBox="0 0 34 33"><circle cx="16.5" cy="16" r="16" fill="#7a1a5a"/><text x="7" y="25" font-size="24" font-weight="bold" fill="#fff" font-family="Liberation Sans">D</text></svg>
<svg class="r" style="left:1860px;top:721px;" width="34" height="33" viewBox="0 0 34 33"><circle cx="16.5" cy="16" r="16" fill="#1f7a44"/><path d="M17 3 V15.5 L25 25" fill="none" stroke="#fff" stroke-width="2.2"/></svg>
<svg class="r" style="left:1860px;top:767px;" width="34" height="33" viewBox="0 0 34 33"><circle cx="16.5" cy="16" r="16" fill="#8a8a8a"/><path d="M6 16 H24 M18 9 L25 16 L18 23" fill="none" stroke="#fff" stroke-width="3.5"/></svg>
<svg class="r" style="left:1860px;top:812px;" width="34" height="14" viewBox="0 0 34 14"><path d="M1 14 A16 16 0 0 1 33 14 Z" fill="#d01020"/></svg>
<div class="r" style="left:1876px;top:813px;width:153px;height:13px;background:#b4b4b4;"></div>
<svg class="r" style="left:1945px;top:815px;" width="14" height="8" viewBox="0 0 14 8"><path d="M1 1 L7 7 L13 1" fill="none" stroke="#fff" stroke-width="2"/></svg>
<div class="r" style="left:1829px;top:826px;width:250px;height:1.5px;background:#a8a8a8;"></div>
<div class="r" style="left:1829px;top:828px;width:250px;height:2px;background:#e0e0e0;"></div>
<div class="r" style="left:1829px;top:830px;width:250px;height:38px;background:#f0f0f0;"></div>
<svg class="r" style="left:1834px;top:837px;" width="32" height="30" viewBox="0 0 32 30"><defs><linearGradient id="fo" x1="0" y1="0" x2="0" y2="1"><stop offset="0" stop-color="#fff6dc"/><stop offset="1" stop-color="#f6d27a"/></linearGradient></defs><path d="M3.8 7 V4.8 Q3.8 2.8 6 2.8 H13 Q15.2 2.8 15.2 4.8 V7" fill="#fff3d0" stroke="#c08838" stroke-width="1.8"/><rect x="2" y="6.5" width="21.5" height="17" fill="url(#fo)" stroke="#b87830" stroke-width="2"/><path d="M2 23.5 L11.5 13 H30.5 L20.5 23.5 Z" fill="#f9dc90" stroke="#b87830" stroke-width="2" stroke-linejoin="round"/></svg>
<div class="t" style="left:1871.0px;top:840.3px;font-size:23px;line-height:23px;color:#000;letter-spacing:0.29px;">Notes and Arr...</div>
<svg class="r" style="left:2053px;top:843px;" width="22" height="16" viewBox="0 0 22 16"><path d="M1 8 L7 2 V14 Z M21 8 L15 2 V14 Z" fill="none" stroke="#9a9a9a" stroke-width="1.3"/><path d="M8 5 H14 M8 11 H14" stroke="#9a9a9a" stroke-width="1.3" stroke-dasharray="2 1"/></svg>
<div class="r" style="left:1829px;top:868px;width:250px;height:99px;background:#fff;"></div>
<svg class="r" style="left:1861px;top:881px;" width="34" height="30" viewBox="0 0 34 30"><path d="M1 2 H32 V18 L24 27 H1 Z" fill="#fdf07a" stroke="#c8b040" stroke-width="1"/><path d="M24 27 V18 H32" fill="#e8d040"/></svg>
<div class="t" style="left:1899.0px;top:886.3px;font-size:23px;line-height:23px;color:#000;letter-spacing:1.20px;">Note</div>
<svg class="r" style="left:1862px;top:927px;" width="32" height="32" viewBox="0 0 32 32"><path d="M2 2 L28 28" stroke="#000" stroke-width="2.5"/><path d="M2 2 L13 3 M2 2 L3 13" stroke="#000" stroke-width="2.5"/></svg>
<div class="t" style="left:1900.0px;top:932.3px;font-size:23px;line-height:23px;color:#000;letter-spacing:0.01px;">Arrow</div>
<!--FILES-->
<svg class="r" style="left:2093px;top:155px;" width="868" height="1571" viewBox="0 0 868 1571"><path d="M0.5 1570.5 V12 Q0.5 0.5 12 0.5 H854 Q866.5 0.5 866.5 12 V1570.5 Z" fill="#f0f0f0" stroke="#a0a0a0" stroke-width="1"/></svg>
<svg class="r" style="left:2495px;top:155px;" width="190" height="41" viewBox="0 0 190 41"><defs><linearGradient id="fg" x1="0" y1="0" x2="0" y2="1"><stop offset="0" stop-color="#ffffff"/><stop offset="1" stop-color="#f0f0f0"/></linearGradient></defs><path d="M0.5 41 V12 Q0.5 0.5 12 0.5 H126 C 145 0.5, 160 12, 172 25 C 180 34, 184 40, 189 40.5" fill="url(#fg)" stroke="#a0a0a0" stroke-width="1"/></svg>
<div class="r" style="left:2236px;top:167px;width:1px;height:28px;background:#a0a0a0;"></div>
<svg class="r" style="left:2236px;top:155px;" width="12" height="13" viewBox="0 0 12 13"><path d="M0.5 12.5 Q0.5 0.5 11 0.5" fill="none" stroke="#a0a0a0"/></svg>
<div class="r" style="left:2389px;top:167px;width:1px;height:28px;background:#a0a0a0;"></div>
<svg class="r" style="left:2389px;top:155px;" width="12" height="13" viewBox="0 0 12 13"><path d="M0.5 12.5 Q0.5 0.5 11 0.5" fill="none" stroke="#a0a0a0"/></svg>
<div class="r" style="left:2094px;top:195px;width:401px;height:1px;background:#a0a0a0;"></div>
<div class="r" style="left:2684px;top:195px;width:275px;height:1px;background:#a0a0a0;"></div>
<svg class="r" style="left:2826px;top:155px;" width="12" height="41" viewBox="0 0 12 41"><path d="M0 0.5 Q11.5 0.5 11.5 12 V40" fill="none" stroke="#a0a0a0"/></svg>
<svg class="r" style="left:2105px;top:162px;" width="28" height="28" viewBox="0 0 28 28"><rect x="1" y="1" width="25" height="20" rx="2" fill="#e8f0fa" stroke="#2a5aa8" stroke-width="2.5"/><path d="M6 8 H14 M6 13 H19" stroke="#2a5aa8" stroke-width="2"/><rect x="9" y="22" width="9" height="3" fill="#2a5aa8"/><rect x="3" y="25" width="21" height="2.5" fill="#2a5aa8"/></svg>
<div class="t" style="left:2141.0px;top:168.3px;font-size:23px;line-height:23px;color:#000;letter-spacing:0.32px;">Console</div>
<svg class="r" style="left:2247px;top:164px;" width="27" height="27" viewBox="0 0 27 27"><rect x="1" y="1" width="25" height="25" fill="#d8d8dc" stroke="#7a7a80" stroke-width="1.5"/><rect x="4" y="4" width="19" height="3" fill="#3a5a9a"/><path d="M5 11 H8 M11 11 H14 M17 11 H21 M5 15 H8 M11 15 H14 M17 15 H21 M5 19 H8 M11 19 H14 M17 19 H21" stroke="#505050" stroke-width="2"/><path d="M5 23 H8" stroke="#d02020" stroke-width="2"/><path d="M15 23 H22" stroke="#20a040" stroke-width="2"/></svg>
<div class="t" style="left:2283.0px;top:168.3px;font-size:23px;line-height:23px;color:#000;letter-spacing:0.06px;">Evaluator</div>
<svg class="r" style="left:2398px;top:161px;" width="33" height="30" viewBox="0 0 33 30"><circle cx="7" cy="5" r="3.5" fill="#7a9ac8"/><path d="M3 10 H11 V29 H3 Z" fill="#7a9ac8"/><circle cx="20" cy="16" r="11" fill="#dce8f6" stroke="#3a6ab8" stroke-width="2.5" stroke-dasharray="3 1.5"/><text x="14.5" y="22" font-size="16" font-weight="bold" fill="#3a6ab8" font-family="Liberation Sans">?</text></svg>
<div class="t" style="left:2436.0px;top:168.3px;font-size:23px;line-height:23px;color:#000;letter-spacing:1.00px;">Help</div>
<svg class="r" style="left:2504px;top:165px;" width="32" height="28" viewBox="0 0 32 28"><path d="M2 4 H11 L13 2 H20 L21 6 H26 V11 H9 L2 26 Z" fill="#f2d48a" stroke="#b07830" stroke-width="2"/><path d="M2 26 L9 12 H31 L24 26 Z" fill="#f5d060" stroke="#b07830" stroke-width="2"/></svg>
<div class="t" style="left:2544.0px;top:167.8px;font-size:23px;line-height:23px;color:#000;letter-spacing:-0.62px;">Files</div>
<svg class="r" style="left:2606px;top:166px;" width="22" height="22" viewBox="0 0 22 22"><path d="M3 3 L19 19 M19 3 L3 19" stroke="#7a7a7a" stroke-width="5.5"/><path d="M3 3 L19 19 M19 3 L3 19" stroke="#fff" stroke-width="3"/></svg>
<svg class="r" style="left:2679px;top:165px;" width="25" height="25" viewBox="0 0 25 25"><rect x="1" y="1" width="23" height="23" fill="#eef6fd" stroke="#8a7a5a" stroke-width="1.8"/><rect x="1" y="1" width="23" height="4" fill="#4a8ad0"/></svg>
<div class="t" style="left:2715.0px;top:168.3px;font-size:23px;line-height:23px;color:#000;letter-spacing:0.98px;">Model Ov</div>
<div class="r" style="left:2880px;top:164px;width:19px;height:7px;border:1.5px solid #666;box-sizing:border-box;background:#fff;"></div>
<div class="r" style="left:2919px;top:164px;width:19px;height:19px;border:1.5px solid #666;box-sizing:border-box;background:#fff;"></div>
<div class="r" style="left:2919px;top:167px;width:19px;height:1.5px;background:#666;"></div>
<svg class="r" style="left:2798px;top:207px;" width="28" height="28" viewBox="0 0 28 28"><rect x="1" y="1" width="20" height="20" fill="#dfe8f5" stroke="#8a9ac0" stroke-width="1.5"/><rect x="5" y="6" width="21" height="21" fill="#eef4fc" stroke="#8a9ac0" stroke-width="1.8"/><path d="M9 17 H22" stroke="#1a3a7a" stroke-width="2.5"/></svg>
<div class="r" style="left:2830px;top:201px;width:39px;height:37px;background:#c4dcf2;border:1px solid #99c9ef;box-sizing:border-box;"></div>
<svg class="r" style="left:2833px;top:204px;" width="34" height="32" viewBox="0 0 34 32"><path d="M2 9 L11 2 V6 H24 V12 H11 V16 Z" fill="#fce7a0" stroke="#b07820" stroke-width="1.8"/><path d="M32 23 L23 16 V20 H9 V26 H23 V30 Z" fill="#fce7a0" stroke="#b07820" stroke-width="1.8"/></svg>
<svg class="r" style="left:2874px;top:205px;" width="30" height="30" viewBox="0 0 30 30"><path d="M6 1 H20 L27 8 V28 H6 Z" fill="#f3f6fb" stroke="#a89a70" stroke-width="1.5"/><path d="M3 12 Q5 6 11 9 M12 16 Q10 22 4 19" stroke="#c08a20" stroke-width="3" fill="none"/></svg>
<svg class="r" style="left:2930px;top:210px;" width="19" height="11" viewBox="0 0 19 11"><path d="M0 1 H18" stroke="#555" stroke-width="2"/><path d="M4 4 L9 9 L14 4" fill="#fff" stroke="none"/><rect x="8" y="8" width="2" height="2" fill="#444"/></svg>
<svg class="r" style="left:2970px;top:157px;" width="30" height="5" viewBox="0 0 30 5"><rect x="0" y="0" width="3" height="3" fill="#a89f8a"/><rect x="8" y="0" width="3" height="3" fill="#a89f8a"/><rect x="16" y="0" width="3" height="3" fill="#a89f8a"/><rect x="24" y="0" width="3" height="3" fill="#a89f8a"/></svg>
<svg class="r" style="left:2975px;top:175px;" width="19" height="18" viewBox="0 0 19 18"><rect x="5" y="1" width="13" height="9" fill="none" stroke="#6a6050" stroke-width="2.5"/><rect x="1" y="8" width="13" height="9" fill="#f0f0f0" stroke="#6a6050" stroke-width="2.5"/></svg>
<svg class="r" style="left:2968px;top:206px;" width="33" height="33" viewBox="0 0 33 33"><defs><linearGradient id="rss" x1="0" y1="0" x2="1" y2="1"><stop offset="0" stop-color="#f8a040"/><stop offset="1" stop-color="#e06020"/></linearGradient></defs><rect x="0.5" y="0.5" width="31" height="31" rx="6" fill="url(#rss)"/><circle cx="8" cy="24" r="3.5" fill="#fff"/><path d="M5 14 A13 13 0 0 1 18 27 M5 6 A21 21 0 0 1 26 27" fill="none" stroke="#fff" stroke-width="4.5"/></svg>
<div class="r" style="left:2099px;top:239px;width:857px;height:1482px;background:#fff;"></div>
<div class="r" style="left:2196px;top:492px;width:305px;height:35px;background:#d9d9d9;"></div>
<svg class="r" style="left:2108px;top:249.39999999999998px;" width="20" height="18" viewBox="0 0 20 18"><path d="M1.5 5 L9.8 13 L18 5" fill="none" stroke="#3a3a3a" stroke-width="3"/></svg>
<svg class="r" style="left:2134px;top:244.39999999999998px;" width="35" height="28" viewBox="0 0 35 28"><path d="M7.5 6 V3 Q7.5 1.2 9.5 1.2 H16.5 Q18.5 1.2 18.5 3 V6" fill="#fff3d0" stroke="#c8a060" stroke-width="1.8"/><rect x="1" y="4.5" width="30" height="3.6" fill="#8a7a90"/><rect x="3.5" y="7" width="25" height="15.5" fill="#fbe6b0" stroke="#3040a8" stroke-width="2"/><path d="M5.4 23.7 L12 13.8 H32.8 L24.3 23.7 Z" fill="#b0dcf8" stroke="#2a3aa8" stroke-width="2" stroke-linejoin="round"/></svg>
<div class="t" style="left:2171.0px;top:247.7px;font-size:23px;line-height:23px;color:#000;letter-spacing:0.34px;">Example Models</div>
<svg class="r" style="left:2142px;top:283.4px;" width="18" height="18" viewBox="0 0 18 18"><path d="M5 2 L12 9 L5 16" fill="none" stroke="#a0a0a0" stroke-width="2.8"/></svg>
<svg class="r" style="left:2168px;top:281.4px;" width="33" height="28" viewBox="0 0 33 28"><defs><linearGradient id="fo" x1="0" y1="0" x2="0" y2="1"><stop offset="0" stop-color="#fff6dc"/><stop offset="1" stop-color="#f6d27a"/></linearGradient></defs><path d="M3.8 7 V4.8 Q3.8 2.8 6 2.8 H13 Q15.2 2.8 15.2 4.8 V7" fill="#fff3d0" stroke="#c08838" stroke-width="1.8"/><rect x="2" y="6.5" width="21.5" height="17" fill="url(#fo)" stroke="#b87830" stroke-width="2"/><path d="M2 23.5 L11.5 13 H30.5 L20.5 23.5 Z" fill="#f9dc90" stroke="#b87830" stroke-width="2" stroke-linejoin="round"/></svg>
<div class="t" style="left:2203.0px;top:283.7px;font-size:23px;line-height:23px;color:#000;letter-spacing:-0.32px;">Business</div>
<svg class="r" style="left:2142px;top:319.4px;" width="18" height="18" viewBox="0 0 18 18"><path d="M5 2 L12 9 L5 16" fill="none" stroke="#a0a0a0" stroke-width="2.8"/></svg>
<svg class="r" style="left:2168px;top:317.4px;" width="33" height="28" viewBox="0 0 33 28"><defs><linearGradient id="fo" x1="0" y1="0" x2="0" y2="1"><stop offset="0" stop-color="#fff6dc"/><stop offset="1" stop-color="#f6d27a"/></linearGradient></defs><path d="M3.8 7 V4.8 Q3.8 2.8 6 2.8 H13 Q15.2 2.8 15.2 4.8 V7" fill="#fff3d0" stroke="#c08838" stroke-width="1.8"/><rect x="2" y="6.5" width="21.5" height="17" fill="url(#fo)" stroke="#b87830" stroke-width="2"/><path d="M2 23.5 L11.5 13 H30.5 L20.5 23.5 Z" fill="#f9dc90" stroke="#b87830" stroke-width="2" stroke-linejoin="round"/></svg>
<div class="t" style="left:2203.0px;top:319.7px;font-size:23px;line-height:23px;color:#000;letter-spacing:0.41px;">Discrete Event Simulation</div>
<svg class="r" style="left:2142px;top:355.4px;" width="18" height="18" viewBox="0 0 18 18"><path d="M5 2 L12 9 L5 16" fill="none" stroke="#a0a0a0" stroke-width="2.8"/></svg>
<svg class="r" style="left:2168px;top:353.4px;" width="33" height="28" viewBox="0 0 33 28"><defs><linearGradient id="fo" x1="0" y1="0" x2="0" y2="1"><stop offset="0" stop-color="#fff6dc"/><stop offset="1" stop-color="#f6d27a"/></linearGradient></defs><path d="M3.8 7 V4.8 Q3.8 2.8 6 2.8 H13 Q15.2 2.8 15.2 4.8 V7" fill="#fff3d0" stroke="#c08838" stroke-width="1.8"/><rect x="2" y="6.5" width="21.5" height="17" fill="url(#fo)" stroke="#b87830" stroke-width="2"/><path d="M2 23.5 L11.5 13 H30.5 L20.5 23.5 Z" fill="#f9dc90" stroke="#b87830" stroke-width="2" stroke-linejoin="round"/></svg>
<div class="t" style="left:2203.0px;top:355.7px;font-size:23px;line-height:23px;color:#000;letter-spacing:0.12px;">Get Started</div>
<svg class="r" style="left:2142px;top:391.4px;" width="18" height="18" viewBox="0 0 18 18"><path d="M5 2 L12 9 L5 16" fill="none" stroke="#a0a0a0" stroke-width="2.8"/></svg>
<svg class="r" style="left:2168px;top:389.4px;" width="33" height="28" viewBox="0 0 33 28"><defs><linearGradient id="fo" x1="0" y1="0" x2="0" y2="1"><stop offset="0" stop-color="#fff6dc"/><stop offset="1" stop-color="#f6d27a"/></linearGradient></defs><path d="M3.8 7 V4.8 Q3.8 2.8 6 2.8 H13 Q15.2 2.8 15.2 4.8 V7" fill="#fff3d0" stroke="#c08838" stroke-width="1.8"/><rect x="2" y="6.5" width="21.5" height="17" fill="url(#fo)" stroke="#b87830" stroke-width="2"/><path d="M2 23.5 L11.5 13 H30.5 L20.5 23.5 Z" fill="#f9dc90" stroke="#b87830" stroke-width="2" stroke-linejoin="round"/></svg>
<div class="t" style="left:2203.0px;top:391.7px;font-size:23px;line-height:23px;color:#000;letter-spacing:0.34px;">Healthcare</div>
<svg class="r" style="left:2140px;top:429.4px;" width="20" height="18" viewBox="0 0 20 18"><path d="M1.5 5 L9.8 13 L18 5" fill="none" stroke="#3a3a3a" stroke-width="3"/></svg>
<svg class="r" style="left:2168px;top:425.4px;" width="33" height="28" viewBox="0 0 33 28"><defs><linearGradient id="fo" x1="0" y1="0" x2="0" y2="1"><stop offset="0" stop-color="#fff6dc"/><stop offset="1" stop-color="#f6d27a"/></linearGradient></defs><path d="M3.8 7 V4.8 Q3.8 2.8 6 2.8 H13 Q15.2 2.8 15.2 4.8 V7" fill="#fff3d0" stroke="#c08838" stroke-width="1.8"/><rect x="2" y="6.5" width="21.5" height="17" fill="url(#fo)" stroke="#b87830" stroke-width="2"/><path d="M2 23.5 L11.5 13 H30.5 L20.5 23.5 Z" fill="#f9dc90" stroke="#b87830" stroke-width="2" stroke-linejoin="round"/></svg>
<div class="t" style="left:2203.0px;top:427.7px;font-size:23px;line-height:23px;color:#000;letter-spacing:0.17px;">Healthcare Training Examples</div>
<svg class="r" style="left:2200px;top:455.0px;" width="34" height="34" viewBox="0 0 34 34"><path d="M9.1 3.2 H23.5 L29.7 9.4 V27.8 H9.1 Z" fill="#eef2fa" stroke="#b08a30" stroke-width="2"/><path d="M23.5 3.2 V9.4 H29.7 Z" fill="#dcc080"/><path d="M5 29 L17 16.8 M9.9 9.7 Q4 18 9.3 24.6 Q14 28.5 24 24" fill="none" stroke="#1a4a80" stroke-width="1.3"/><circle cx="9.9" cy="9.7" r="2.9" fill="#d82030" stroke="#1a3a70" stroke-width="1"/><circle cx="17" cy="16.8" r="2.9" fill="#1a8040" stroke="#1a3a70" stroke-width="1"/><circle cx="24" cy="24" r="3" fill="#2a80c0" stroke="#1a3a70" stroke-width="1"/><circle cx="5" cy="29" r="3.5" fill="#1a60a8"/></svg>
<div class="t" style="left:2234.0px;top:463.7px;font-size:23px;line-height:23px;color:#000;letter-spacing:0.34px;">Example01-Intro.trex</div>
<svg class="r" style="left:2200px;top:491.0px;" width="34" height="34" viewBox="0 0 34 34"><path d="M9.1 3.2 H23.5 L29.7 9.4 V27.8 H9.1 Z" fill="#eef2fa" stroke="#b08a30" stroke-width="2"/><path d="M23.5 3.2 V9.4 H29.7 Z" fill="#dcc080"/><path d="M5 29 L17 16.8 M9.9 9.7 Q4 18 9.3 24.6 Q14 28.5 24 24" fill="none" stroke="#1a4a80" stroke-width="1.3"/><circle cx="9.9" cy="9.7" r="2.9" fill="#d82030" stroke="#1a3a70" stroke-width="1"/><circle cx="17" cy="16.8" r="2.9" fill="#1a8040" stroke="#1a3a70" stroke-width="1"/><circle cx="24" cy="24" r="3" fill="#2a80c0" stroke="#1a3a70" stroke-width="1"/><circle cx="5" cy="29" r="3.5" fill="#1a60a8"/></svg>
<div class="t" style="left:2234.0px;top:499.7px;font-size:23px;line-height:23px;color:#000;letter-spacing:0.10px;">Example02-Variables.trex</div>
<svg class="r" style="left:2200px;top:527.0px;" width="34" height="34" viewBox="0 0 34 34"><path d="M9.1 3.2 H23.5 L29.7 9.4 V27.8 H9.1 Z" fill="#eef2fa" stroke="#b08a30" stroke-width="2"/><path d="M23.5 3.2 V9.4 H29.7 Z" fill="#dcc080"/><path d="M5 29 L17 16.8 M9.9 9.7 Q4 18 9.3 24.6 Q14 28.5 24 24" fill="none" stroke="#1a4a80" stroke-width="1.3"/><circle cx="9.9" cy="9.7" r="2.9" fill="#d82030" stroke="#1a3a70" stroke-width="1"/><circle cx="17" cy="16.8" r="2.9" fill="#1a8040" stroke="#1a3a70" stroke-width="1"/><circle cx="24" cy="24" r="3" fill="#2a80c0" stroke="#1a3a70" stroke-width="1"/><circle cx="5" cy="29" r="3.5" fill="#1a60a8"/></svg>
<div class="t" style="left:2234.0px;top:535.7px;font-size:23px;line-height:23px;color:#000;letter-spacing:0.15px;">Example03-Clones.trex</div>
<svg class="r" style="left:2200px;top:563.0px;" width="34" height="34" viewBox="0 0 34 34"><path d="M9.1 3.2 H23.5 L29.7 9.4 V27.8 H9.1 Z" fill="#eef2fa" stroke="#b08a30" stroke-width="2"/><path d="M23.5 3.2 V9.4 H29.7 Z" fill="#dcc080"/><path d="M5 29 L17 16.8 M9.9 9.7 Q4 18 9.3 24.6 Q14 28.5 24 24" fill="none" stroke="#1a4a80" stroke-width="1.3"/><circle cx="9.9" cy="9.7" r="2.9" fill="#d82030" stroke="#1a3a70" stroke-width="1"/><circle cx="17" cy="16.8" r="2.9" fill="#1a8040" stroke="#1a3a70" stroke-width="1"/><circle cx="24" cy="24" r="3" fill="#2a80c0" stroke="#1a3a70" stroke-width="1"/><circle cx="5" cy="29" r="3.5" fill="#1a60a8"/></svg>
<div class="t" style="left:2234.0px;top:571.7px;font-size:23px;line-height:23px;color:#000;letter-spacing:0.35px;">Example04-Dominance.trex</div>
<svg class="r" style="left:2200px;top:599.0px;" width="34" height="34" viewBox="0 0 34 34"><path d="M9.1 3.2 H23.5 L29.7 9.4 V27.8 H9.1 Z" fill="#eef2fa" stroke="#b08a30" stroke-width="2"/><path d="M23.5 3.2 V9.4 H29.7 Z" fill="#dcc080"/><path d="M5 29 L17 16.8 M9.9 9.7 Q4 18 9.3 24.6 Q14 28.5 24 24" fill="none" stroke="#1a4a80" stroke-width="1.3"/><circle cx="9.9" cy="9.7" r="2.9" fill="#d82030" stroke="#1a3a70" stroke-width="1"/><circle cx="17" cy="16.8" r="2.9" fill="#1a8040" stroke="#1a3a70" stroke-width="1"/><circle cx="24" cy="24" r="3" fill="#2a80c0" stroke="#1a3a70" stroke-width="1"/><circle cx="5" cy="29" r="3.5" fill="#1a60a8"/></svg>
<div class="t" style="left:2234.0px;top:607.7px;font-size:23px;line-height:23px;color:#000;letter-spacing:0.35px;">Example05-DrugComparison.trex</div>
<svg class="r" style="left:2200px;top:635.0px;" width="34" height="34" viewBox="0 0 34 34"><path d="M9.1 3.2 H23.5 L29.7 9.4 V27.8 H9.1 Z" fill="#eef2fa" stroke="#b08a30" stroke-width="2"/><path d="M23.5 3.2 V9.4 H29.7 Z" fill="#dcc080"/><path d="M5 29 L17 16.8 M9.9 9.7 Q4 18 9.3 24.6 Q14 28.5 24 24" fill="none" stroke="#1a4a80" stroke-width="1.3"/><circle cx="9.9" cy="9.7" r="2.9" fill="#d82030" stroke="#1a3a70" stroke-width="1"/><circle cx="17" cy="16.8" r="2.9" fill="#1a8040" stroke="#1a3a70" stroke-width="1"/><circle cx="24" cy="24" r="3" fill="#2a80c0" stroke="#1a3a70" stroke-width="1"/><circle cx="5" cy="29" r="3.5" fill="#1a60a8"/></svg>
<div class="t" style="left:2234.0px;top:643.7px;font-size:23px;line-height:23px;color:#000;letter-spacing:-0.14px;">Example06-PSA.trex</div>
<svg class="r" style="left:2200px;top:671.0px;" width="34" height="34" viewBox="0 0 34 34"><path d="M9.1 3.2 H23.5 L29.7 9.4 V27.8 H9.1 Z" fill="#eef2fa" stroke="#b08a30" stroke-width="2"/><path d="M23.5 3.2 V9.4 H29.7 Z" fill="#dcc080"/><path d="M5 29 L17 16.8 M9.9 9.7 Q4 18 9.3 24.6 Q14 28.5 24 24" fill="none" stroke="#1a4a80" stroke-width="1.3"/><circle cx="9.9" cy="9.7" r="2.9" fill="#d82030" stroke="#1a3a70" stroke-width="1"/><circle cx="17" cy="16.8" r="2.9" fill="#1a8040" stroke="#1a3a70" stroke-width="1"/><circle cx="24" cy="24" r="3" fill="#2a80c0" stroke="#1a3a70" stroke-width="1"/><circle cx="5" cy="29" r="3.5" fill="#1a60a8"/></svg>
<div class="t" style="left:2234.0px;top:679.7px;font-size:23px;line-height:23px;color:#000;letter-spacing:0.37px;">Example07-MarkovSimple.trex</div>
<svg class="r" style="left:2200px;top:707.0px;" width="34" height="34" viewBox="0 0 34 34"><path d="M9.1 3.2 H23.5 L29.7 9.4 V27.8 H9.1 Z" fill="#eef2fa" stroke="#b08a30" stroke-width="2"/><path d="M23.5 3.2 V9.4 H29.7 Z" fill="#dcc080"/><path d="M5 29 L17 16.8 M9.9 9.7 Q4 18 9.3 24.6 Q14 28.5 24 24" fill="none" stroke="#1a4a80" stroke-width="1.3"/><circle cx="9.9" cy="9.7" r="2.9" fill="#d82030" stroke="#1a3a70" stroke-width="1"/><circle cx="17" cy="16.8" r="2.9" fill="#1a8040" stroke="#1a3a70" stroke-width="1"/><circle cx="24" cy="24" r="3" fill="#2a80c0" stroke="#1a3a70" stroke-width="1"/><circle cx="5" cy="29" r="3.5" fill="#1a60a8"/></svg>
<div class="t" style="left:2234.0px;top:715.7px;font-size:23px;line-height:23px;color:#000;letter-spacing:0.28px;">Example08-MarkovCancer.trex</div>
<svg class="r" style="left:2200px;top:743.0px;" width="34" height="34" viewBox="0 0 34 34"><path d="M9.1 3.2 H23.5 L29.7 9.4 V27.8 H9.1 Z" fill="#eef2fa" stroke="#b08a30" stroke-width="2"/><path d="M23.5 3.2 V9.4 H29.7 Z" fill="#dcc080"/><path d="M5 29 L17 16.8 M9.9 9.7 Q4 18 9.3 24.6 Q14 28.5 24 24" fill="none" stroke="#1a4a80" stroke-width="1.3"/><circle cx="9.9" cy="9.7" r="2.9" fill="#d82030" stroke="#1a3a70" stroke-width="1"/><circle cx="17" cy="16.8" r="2.9" fill="#1a8040" stroke="#1a3a70" stroke-width="1"/><circle cx="24" cy="24" r="3" fill="#2a80c0" stroke="#1a3a70" stroke-width="1"/><circle cx="5" cy="29" r="3.5" fill="#1a60a8"/></svg>
<div class="t" style="left:2234.0px;top:751.7px;font-size:23px;line-height:23px;color:#000;letter-spacing:0.26px;">Example09-MarkovCancerDecision.trex</div>
<svg class="r" style="left:2200px;top:779.0px;" width="34" height="34" viewBox="0 0 34 34"><path d="M9.1 3.2 H23.5 L29.7 9.4 V27.8 H9.1 Z" fill="#eef2fa" stroke="#b08a30" stroke-width="2"/><path d="M23.5 3.2 V9.4 H29.7 Z" fill="#dcc080"/><path d="M5 29 L17 16.8 M9.9 9.7 Q4 18 9.3 24.6 Q14 28.5 24 24" fill="none" stroke="#1a4a80" stroke-width="1.3"/><circle cx="9.9" cy="9.7" r="2.9" fill="#d82030" stroke="#1a3a70" stroke-width="1"/><circle cx="17" cy="16.8" r="2.9" fill="#1a8040" stroke="#1a3a70" stroke-width="1"/><circle cx="24" cy="24" r="3" fill="#2a80c0" stroke="#1a3a70" stroke-width="1"/><circle cx="5" cy="29" r="3.5" fill="#1a60a8"/></svg>
<div class="t" style="left:2234.0px;top:787.7px;font-size:23px;line-height:23px;color:#000;letter-spacing:0.30px;">Example10-MarkovCancerTime.trex</div>
<svg class="r" style="left:2200px;top:815.0px;" width="34" height="34" viewBox="0 0 34 34"><path d="M9.1 3.2 H23.5 L29.7 9.4 V27.8 H9.1 Z" fill="#eef2fa" stroke="#b08a30" stroke-width="2"/><path d="M23.5 3.2 V9.4 H29.7 Z" fill="#dcc080"/><path d="M5 29 L17 16.8 M9.9 9.7 Q4 18 9.3 24.6 Q14 28.5 24 24" fill="none" stroke="#1a4a80" stroke-width="1.3"/><circle cx="9.9" cy="9.7" r="2.9" fill="#d82030" stroke="#1a3a70" stroke-width="1"/><circle cx="17" cy="16.8" r="2.9" fill="#1a8040" stroke="#1a3a70" stroke-width="1"/><circle cx="24" cy="24" r="3" fill="#2a80c0" stroke="#1a3a70" stroke-width="1"/><circle cx="5" cy="29" r="3.5" fill="#1a60a8"/></svg>
<div class="t" style="left:2234.0px;top:823.7px;font-size:23px;line-height:23px;color:#000;letter-spacing:0.39px;">Example11-MarkovCancerTunnel.trex</div>
<svg class="r" style="left:2200px;top:851.0px;" width="34" height="34" viewBox="0 0 34 34"><path d="M9.1 3.2 H23.5 L29.7 9.4 V27.8 H9.1 Z" fill="#eef2fa" stroke="#b08a30" stroke-width="2"/><path d="M23.5 3.2 V9.4 H29.7 Z" fill="#dcc080"/><path d="M5 29 L17 16.8 M9.9 9.7 Q4 18 9.3 24.6 Q14 28.5 24 24" fill="none" stroke="#1a4a80" stroke-width="1.3"/><circle cx="9.9" cy="9.7" r="2.9" fill="#d82030" stroke="#1a3a70" stroke-width="1"/><circle cx="17" cy="16.8" r="2.9" fill="#1a8040" stroke="#1a3a70" stroke-width="1"/><circle cx="24" cy="24" r="3" fill="#2a80c0" stroke="#1a3a70" stroke-width="1"/><circle cx="5" cy="29" r="3.5" fill="#1a60a8"/></svg>
<div class="t" style="left:2234.0px;top:859.7px;font-size:23px;line-height:23px;color:#000;letter-spacing:0.52px;">Example12-Microsimulation.trex</div>
<svg class="r" style="left:2200px;top:887.0px;" width="34" height="34" viewBox="0 0 34 34"><path d="M9.1 3.2 H23.5 L29.7 9.4 V27.8 H9.1 Z" fill="#eef2fa" stroke="#b08a30" stroke-width="2"/><path d="M23.5 3.2 V9.4 H29.7 Z" fill="#dcc080"/><path d="M5 29 L17 16.8 M9.9 9.7 Q4 18 9.3 24.6 Q14 28.5 24 24" fill="none" stroke="#1a4a80" stroke-width="1.3"/><circle cx="9.9" cy="9.7" r="2.9" fill="#d82030" stroke="#1a3a70" stroke-width="1"/><circle cx="17" cy="16.8" r="2.9" fill="#1a8040" stroke="#1a3a70" stroke-width="1"/><circle cx="24" cy="24" r="3" fill="#2a80c0" stroke="#1a3a70" stroke-width="1"/><circle cx="5" cy="29" r="3.5" fill="#1a60a8"/></svg>
<div class="t" style="left:2234.0px;top:895.7px;font-size:23px;line-height:23px;color:#000;letter-spacing:0.31px;">Example13-MicrosimulationPSA.trex</div>
<svg class="r" style="left:2200px;top:923.0px;" width="34" height="34" viewBox="0 0 34 34"><path d="M9.1 3.2 H23.5 L29.7 9.4 V27.8 H9.1 Z" fill="#eef2fa" stroke="#b08a30" stroke-width="2"/><path d="M23.5 3.2 V9.4 H29.7 Z" fill="#dcc080"/><path d="M5 29 L17 16.8 M9.9 9.7 Q4 18 9.3 24.6 Q14 28.5 24 24" fill="none" stroke="#1a4a80" stroke-width="1.3"/><circle cx="9.9" cy="9.7" r="2.9" fill="#d82030" stroke="#1a3a70" stroke-width="1"/><circle cx="17" cy="16.8" r="2.9" fill="#1a8040" stroke="#1a3a70" stroke-width="1"/><circle cx="24" cy="24" r="3" fill="#2a80c0" stroke="#1a3a70" stroke-width="1"/><circle cx="5" cy="29" r="3.5" fill="#1a60a8"/></svg>
<div class="t" style="left:2234.0px;top:931.7px;font-size:23px;line-height:23px;color:#000;letter-spacing:0.37px;">Example14-Bootstrapping.trex</div>
<svg class="r" style="left:2200px;top:959.0px;" width="34" height="34" viewBox="0 0 34 34"><path d="M9.1 3.2 H23.5 L29.7 9.4 V27.8 H9.1 Z" fill="#eef2fa" stroke="#b08a30" stroke-width="2"/><path d="M23.5 3.2 V9.4 H29.7 Z" fill="#dcc080"/><path d="M5 29 L17 16.8 M9.9 9.7 Q4 18 9.3 24.6 Q14 28.5 24 24" fill="none" stroke="#1a4a80" stroke-width="1.3"/><circle cx="9.9" cy="9.7" r="2.9" fill="#d82030" stroke="#1a3a70" stroke-width="1"/><circle cx="17" cy="16.8" r="2.9" fill="#1a8040" stroke="#1a3a70" stroke-width="1"/><circle cx="24" cy="24" r="3" fill="#2a80c0" stroke="#1a3a70" stroke-width="1"/><circle cx="5" cy="29" r="3.5" fill="#1a60a8"/></svg>
<div class="t" style="left:2234.0px;top:967.7px;font-size:23px;line-height:23px;color:#000;letter-spacing:0.43px;">Example14a-Bootstrapping-dist.trex</div>
<svg class="r" style="left:2200px;top:995.0px;" width="34" height="34" viewBox="0 0 34 34"><path d="M9.1 3.2 H23.5 L29.7 9.4 V27.8 H9.1 Z" fill="#eef2fa" stroke="#b08a30" stroke-width="2"/><path d="M23.5 3.2 V9.4 H29.7 Z" fill="#dcc080"/><path d="M5 29 L17 16.8 M9.9 9.7 Q4 18 9.3 24.6 Q14 28.5 24 24" fill="none" stroke="#1a4a80" stroke-width="1.3"/><circle cx="9.9" cy="9.7" r="2.9" fill="#d82030" stroke="#1a3a70" stroke-width="1"/><circle cx="17" cy="16.8" r="2.9" fill="#1a8040" stroke="#1a3a70" stroke-width="1"/><circle cx="24" cy="24" r="3" fill="#2a80c0" stroke="#1a3a70" stroke-width="1"/><circle cx="5" cy="29" r="3.5" fill="#1a60a8"/></svg>
<div class="t" style="left:2234.0px;top:1003.7px;font-size:23px;line-height:23px;color:#000;letter-spacing:0.53px;">Example15-Microsimulation-GlobalN.trex</div>
<svg class="r" style="left:2142px;top:1039.4px;" width="18" height="18" viewBox="0 0 18 18"><path d="M5 2 L12 9 L5 16" fill="none" stroke="#a0a0a0" stroke-width="2.8"/></svg>
<svg class="r" style="left:2168px;top:1037.4px;" width="33" height="28" viewBox="0 0 33 28"><defs><linearGradient id="fo" x1="0" y1="0" x2="0" y2="1"><stop offset="0" stop-color="#fff6dc"/><stop offset="1" stop-color="#f6d27a"/></linearGradient></defs><path d="M3.8 7 V4.8 Q3.8 2.8 6 2.8 H13 Q15.2 2.8 15.2 4.8 V7" fill="#fff3d0" stroke="#c08838" stroke-width="1.8"/><rect x="2" y="6.5" width="21.5" height="17" fill="url(#fo)" stroke="#b87830" stroke-width="2"/><path d="M2 23.5 L11.5 13 H30.5 L20.5 23.5 Z" fill="#f9dc90" stroke="#b87830" stroke-width="2" stroke-linejoin="round"/></svg>
<div class="t" style="left:2203.0px;top:1039.7px;font-size:23px;line-height:23px;color:#000;letter-spacing:0.13px;">Legal</div>
<svg class="r" style="left:2142px;top:1075.4px;" width="18" height="18" viewBox="0 0 18 18"><path d="M5 2 L12 9 L5 16" fill="none" stroke="#a0a0a0" stroke-width="2.8"/></svg>
<svg class="r" style="left:2168px;top:1073.4px;" width="33" height="28" viewBox="0 0 33 28"><defs><linearGradient id="fo" x1="0" y1="0" x2="0" y2="1"><stop offset="0" stop-color="#fff6dc"/><stop offset="1" stop-color="#f6d27a"/></linearGradient></defs><path d="M3.8 7 V4.8 Q3.8 2.8 6 2.8 H13 Q15.2 2.8 15.2 4.8 V7" fill="#fff3d0" stroke="#c08838" stroke-width="1.8"/><rect x="2" y="6.5" width="21.5" height="17" fill="url(#fo)" stroke="#b87830" stroke-width="2"/><path d="M2 23.5 L11.5 13 H30.5 L20.5 23.5 Z" fill="#f9dc90" stroke="#b87830" stroke-width="2" stroke-linejoin="round"/></svg>
<div class="t" style="left:2203.0px;top:1075.7px;font-size:23px;line-height:23px;color:#000;letter-spacing:1.15px;">Oil</div>
<svg class="r" style="left:2142px;top:1111.4px;" width="18" height="18" viewBox="0 0 18 18"><path d="M5 2 L12 9 L5 16" fill="none" stroke="#a0a0a0" stroke-width="2.8"/></svg>
<svg class="r" style="left:2168px;top:1109.4px;" width="33" height="28" viewBox="0 0 33 28"><defs><linearGradient id="fo" x1="0" y1="0" x2="0" y2="1"><stop offset="0" stop-color="#fff6dc"/><stop offset="1" stop-color="#f6d27a"/></linearGradient></defs><path d="M3.8 7 V4.8 Q3.8 2.8 6 2.8 H13 Q15.2 2.8 15.2 4.8 V7" fill="#fff3d0" stroke="#c08838" stroke-width="1.8"/><rect x="2" y="6.5" width="21.5" height="17" fill="url(#fo)" stroke="#b87830" stroke-width="2"/><path d="M2 23.5 L11.5 13 H30.5 L20.5 23.5 Z" fill="#f9dc90" stroke="#b87830" stroke-width="2" stroke-linejoin="round"/></svg>
<div class="t" style="left:2203.0px;top:1111.7px;font-size:23px;line-height:23px;color:#000;letter-spacing:0.78px;">Other</div>
<svg class="r" style="left:2142px;top:1147.4px;" width="18" height="18" viewBox="0 0 18 18"><path d="M5 2 L12 9 L5 16" fill="none" stroke="#a0a0a0" stroke-width="2.8"/></svg>
<svg class="r" style="left:2168px;top:1145.4px;" width="33" height="28" viewBox="0 0 33 28"><defs><linearGradient id="fo" x1="0" y1="0" x2="0" y2="1"><stop offset="0" stop-color="#fff6dc"/><stop offset="1" stop-color="#f6d27a"/></linearGradient></defs><path d="M3.8 7 V4.8 Q3.8 2.8 6 2.8 H13 Q15.2 2.8 15.2 4.8 V7" fill="#fff3d0" stroke="#c08838" stroke-width="1.8"/><rect x="2" y="6.5" width="21.5" height="17" fill="url(#fo)" stroke="#b87830" stroke-width="2"/><path d="M2 23.5 L11.5 13 H30.5 L20.5 23.5 Z" fill="#f9dc90" stroke="#b87830" stroke-width="2" stroke-linejoin="round"/></svg>
<div class="t" style="left:2203.0px;top:1147.7px;font-size:23px;line-height:23px;color:#000;letter-spacing:0.24px;">Partitioned Survival Analysis</div>
<svg class="r" style="left:2142px;top:1183.4px;" width="18" height="18" viewBox="0 0 18 18"><path d="M5 2 L12 9 L5 16" fill="none" stroke="#a0a0a0" stroke-width="2.8"/></svg>
<svg class="r" style="left:2168px;top:1181.4px;" width="33" height="28" viewBox="0 0 33 28"><defs><linearGradient id="fo" x1="0" y1="0" x2="0" y2="1"><stop offset="0" stop-color="#fff6dc"/><stop offset="1" stop-color="#f6d27a"/></linearGradient></defs><path d="M3.8 7 V4.8 Q3.8 2.8 6 2.8 H13 Q15.2 2.8 15.2 4.8 V7" fill="#fff3d0" stroke="#c08838" stroke-width="1.8"/><rect x="2" y="6.5" width="21.5" height="17" fill="url(#fo)" stroke="#b87830" stroke-width="2"/><path d="M2 23.5 L11.5 13 H30.5 L20.5 23.5 Z" fill="#f9dc90" stroke="#b87830" stroke-width="2" stroke-linejoin="round"/></svg>
<div class="t" style="left:2203.0px;top:1183.7px;font-size:23px;line-height:23px;color:#000;letter-spacing:-0.02px;">Special Features</div>
<svg class="r" style="left:2110px;top:1219.4px;" width="18" height="18" viewBox="0 0 18 18"><path d="M5 2 L12 9 L5 16" fill="none" stroke="#a0a0a0" stroke-width="2.8"/></svg>
<svg class="r" style="left:2134px;top:1216.4px;" width="35" height="28" viewBox="0 0 35 28"><path d="M7.5 6 V3 Q7.5 1.2 9.5 1.2 H16.5 Q18.5 1.2 18.5 3 V6" fill="#fff3d0" stroke="#c8a060" stroke-width="1.8"/><rect x="1" y="4.5" width="30" height="3.6" fill="#8a7a90"/><rect x="3.5" y="7" width="25" height="15.5" fill="#fbe6b0" stroke="#3040a8" stroke-width="2"/><path d="M5.4 23.7 L12 13.8 H32.8 L24.3 23.7 Z" fill="#b0dcf8" stroke="#2a3aa8" stroke-width="2" stroke-linejoin="round"/></svg>
<div class="t" style="left:2171.0px;top:1219.7px;font-size:23px;line-height:23px;color:#000;letter-spacing:0.38px;">Other Projects</div>
<svg class="r" style="left:2110px;top:1255.4px;" width="18" height="18" viewBox="0 0 18 18"><path d="M5 2 L12 9 L5 16" fill="none" stroke="#a0a0a0" stroke-width="2.8"/></svg>
<svg class="r" style="left:2134px;top:1252.4px;" width="35" height="28" viewBox="0 0 35 28"><path d="M7.5 6 V3 Q7.5 1.2 9.5 1.2 H16.5 Q18.5 1.2 18.5 3 V6" fill="#fff3d0" stroke="#c8a060" stroke-width="1.8"/><rect x="1" y="4.5" width="30" height="3.6" fill="#8a7a90"/><rect x="3.5" y="7" width="25" height="15.5" fill="#fbe6b0" stroke="#3040a8" stroke-width="2"/><path d="M5.4 23.7 L12 13.8 H32.8 L24.3 23.7 Z" fill="#b0dcf8" stroke="#2a3aa8" stroke-width="2" stroke-linejoin="round"/></svg>
<svg class="r" style="left:2132px;top:1248.4px;" width="36" height="36" viewBox="0 0 36 36"><path d="M26 2 V10 Q26 13 22 13" fill="none" stroke="#2a4aa8" stroke-width="1.5"/><polygon points="7,20 13,32 1,32" fill="#f5c400" stroke="#6a5a20"/></svg>
<div class="t" style="left:2171.0px;top:1255.7px;font-size:23px;line-height:23px;color:#000;letter-spacing:0.57px;">Using the Object Interface</div>
<!--BOTTOM-->
<svg class="r" style="left:7px;top:983px;" width="2077" height="743" viewBox="0 0 2077 743"><path d="M0.5 742.5 V12 Q0.5 0.5 12 0.5 H2064 Q2076 0.5 2076 12 V742.5 Z" fill="#f0f0f0" stroke="#a0a0a0" stroke-width="1"/></svg>
<svg class="r" style="left:7px;top:983px;" width="345" height="42" viewBox="0 0 345 42"><defs><linearGradient id="vg" x1="0" y1="0" x2="0" y2="1"><stop offset="0" stop-color="#dae4ef"/><stop offset="1" stop-color="#c6d4e4"/></linearGradient></defs><path d="M0.5 42 V12 Q0.5 0.5 12 0.5 H277 C 292 0.5, 302 10, 312 22 C 320 32, 328 40, 341 41.5 H0.5 Z" fill="url(#vg)" stroke="#a0a0a0" stroke-width="1"/></svg>
<div class="r" style="left:347px;top:1024px;width:1736px;height:1px;background:#a0a0a0;"></div>
<div class="r" style="left:459px;top:995px;width:1px;height:29px;background:#a0a0a0;"></div>
<svg class="r" style="left:448px;top:983px;" width="12" height="13" viewBox="0 0 12 13"><path d="M0 0.5 Q11.5 0.5 11.5 12" fill="none" stroke="#a0a0a0"/></svg>
<div class="r" style="left:651px;top:995px;width:1px;height:29px;background:#a0a0a0;"></div>
<svg class="r" style="left:640px;top:983px;" width="12" height="13" viewBox="0 0 12 13"><path d="M0 0.5 Q11.5 0.5 11.5 12" fill="none" stroke="#a0a0a0"/></svg>
<div class="r" style="left:772px;top:995px;width:1px;height:29px;background:#a0a0a0;"></div>
<svg class="r" style="left:761px;top:983px;" width="12" height="13" viewBox="0 0 12 13"><path d="M0 0.5 Q11.5 0.5 11.5 12" fill="none" stroke="#a0a0a0"/></svg>
<div class="r" style="left:1037px;top:995px;width:1px;height:29px;background:#a0a0a0;"></div>
<svg class="r" style="left:1026px;top:983px;" width="12" height="13" viewBox="0 0 12 13"><path d="M0 0.5 Q11.5 0.5 11.5 12" fill="none" stroke="#a0a0a0"/></svg>
<div class="r" style="left:1222px;top:995px;width:1px;height:29px;background:#a0a0a0;"></div>
<svg class="r" style="left:1211px;top:983px;" width="12" height="13" viewBox="0 0 12 13"><path d="M0 0.5 Q11.5 0.5 11.5 12" fill="none" stroke="#a0a0a0"/></svg>
<div class="r" style="left:1511px;top:995px;width:1px;height:29px;background:#a0a0a0;"></div>
<svg class="r" style="left:1500px;top:983px;" width="12" height="13" viewBox="0 0 12 13"><path d="M0 0.5 Q11.5 0.5 11.5 12" fill="none" stroke="#a0a0a0"/></svg>
<div class="r" style="left:1685px;top:995px;width:1px;height:29px;background:#a0a0a0;"></div>
<svg class="r" style="left:1674px;top:983px;" width="12" height="13" viewBox="0 0 12 13"><path d="M0 0.5 Q11.5 0.5 11.5 12" fill="none" stroke="#a0a0a0"/></svg>
<svg class="r" style="left:16px;top:990px;" width="32" height="32" viewBox="0 0 32 32"><rect x="1" y="6" width="28" height="24" fill="#fff" stroke="#5a7ab0" stroke-width="1.5"/><path d="M2 12 H29 M2 17 H29 M2 22 H29 M2 27 H29" stroke="#9ab0d8" stroke-width="1"/><rect x="0" y="0" width="18" height="13" fill="#fff"/><text x="0" y="13" font-size="15" fill="#1a3a9a" font-family="Liberation Sans">V=</text></svg>
<div class="t" style="left:56.0px;top:996.3px;font-size:23px;line-height:23px;color:#000;letter-spacing:0.18px;">Variable Properties</div>
<svg class="r" style="left:268px;top:993px;" width="22" height="22" viewBox="0 0 22 22"><path d="M3 3 L19 19 M19 3 L3 19" stroke="#8a8a8a" stroke-width="6"/><path d="M3 3 L19 19 M19 3 L3 19" stroke="#fff" stroke-width="3.5"/></svg>
<svg class="r" style="left:337px;top:990px;" width="32" height="32" viewBox="0 0 32 32"><rect x="1" y="6" width="28" height="24" fill="#fff" stroke="#5a7ab0" stroke-width="1.5"/><path d="M2 12 H29 M2 17 H29 M2 22 H29 M2 27 H29" stroke="#9ab0d8" stroke-width="1"/><rect x="0" y="0" width="30" height="13" fill="#fff"/><polygon points="1,7 13,1 13,13" fill="#c8102e"/><text x="15" y="12" font-size="14" font-weight="bold" fill="#1a3a9a" font-family="Liberation Sans">[]</text></svg>
<div class="t" style="left:376.0px;top:996.3px;font-size:23px;line-height:23px;color:#000;letter-spacing:0.04px;">Payoffs</div>
<svg class="r" style="left:469px;top:990px;" width="32" height="32" viewBox="0 0 32 32"><rect x="1" y="6" width="28" height="24" fill="#fff" stroke="#5a7ab0" stroke-width="1.5"/><path d="M2 12 H29 M2 17 H29 M2 22 H29 M2 27 H29" stroke="#9ab0d8" stroke-width="1"/><path d="M3 16 Q10 -2 15 2 Q20 -2 27 16" fill="#fff" stroke="#3a6ab8" stroke-width="1.5"/><path d="M11 6 V16 M15 3 V16 M19 6 V16" stroke="#3a6ab8" stroke-width="1"/></svg>
<div class="t" style="left:509.0px;top:996.3px;font-size:23px;line-height:23px;color:#000;letter-spacing:0.69px;">Distributions</div>
<svg class="r" style="left:661px;top:990px;" width="32" height="32" viewBox="0 0 32 32"><rect x="1" y="6" width="28" height="24" fill="#fff" stroke="#5a7ab0" stroke-width="1.5"/><path d="M2 12 H29 M2 17 H29 M2 22 H29 M2 27 H29" stroke="#9ab0d8" stroke-width="1"/><rect x="0" y="0" width="30" height="13" fill="#fff"/><text x="0" y="13" font-size="15" fill="#1a3a9a" font-family="Liberation Sans">X[]</text></svg>
<div class="t" style="left:701.0px;top:996.3px;font-size:23px;line-height:23px;color:#000;letter-spacing:-0.32px;">Tables</div>
<svg class="r" style="left:785px;top:990px;" width="26" height="32" viewBox="0 0 26 32"><path d="M1 1 H18 L24 7 V30 H1 Z" fill="#fff" stroke="#a08a50" stroke-width="1.5"/><text x="4" y="14" font-size="12" fill="#1a3a9a" font-family="Liberation Sans">V=</text><text x="4" y="27" font-size="12" fill="#1a3a9a" font-family="Liberation Sans">V=</text></svg>
<div class="t" style="left:823.0px;top:996.3px;font-size:23px;line-height:23px;color:#000;letter-spacing:0.50px;">Variable Definitions</div>
<svg class="r" style="left:1046px;top:988px;" width="34" height="34" viewBox="0 0 34 34"><rect x="1" y="6" width="28" height="24" fill="#fff" stroke="#5a7ab0" stroke-width="1.5"/><path d="M2 12 H29 M2 17 H29 M2 22 H29 M2 27 H29" stroke="#9ab0d8" stroke-width="1"/><rect x="0" y="0" width="22" height="17" fill="#fff"/><circle cx="10" cy="9" r="8" fill="#fff" stroke="#6a2a9a" stroke-width="1.8"/><text x="4.5" y="14" font-size="12" font-weight="bold" fill="#1a3a9a" font-family="Liberation Sans">M</text></svg>
<div class="t" style="left:1087.0px;top:996.3px;font-size:23px;line-height:23px;color:#000;letter-spacing:0.86px;">Markov Info</div>
<svg class="r" style="left:1232px;top:990px;" width="34" height="32" viewBox="0 0 34 32"><rect x="1" y="6" width="28" height="24" fill="#fff" stroke="#5a7ab0" stroke-width="1.5"/><path d="M2 12 H29 M2 17 H29 M2 22 H29 M2 27 H29" stroke="#9ab0d8" stroke-width="1"/><rect x="0" y="0" width="32" height="13" fill="#fff"/><text x="0" y="12" font-size="13" font-weight="bold" fill="#3a6ab8" font-family="Liberation Sans">CC=</text></svg>
<div class="t" style="left:1272.0px;top:996.3px;font-size:23px;line-height:23px;color:#000;letter-spacing:0.37px;">Clone Masters/Copies</div>
<svg class="r" style="left:1522px;top:989px;" width="33" height="33" viewBox="0 0 33 33"><circle cx="16" cy="16" r="11" fill="none" stroke="#222" stroke-width="2.8"/><path d="M16 1 V8 M16 24 V31 M1 16 H8 M24 16 H31" stroke="#222" stroke-width="2.8"/><circle cx="16" cy="16" r="3" fill="#222"/></svg>
<div class="t" style="left:1562.0px;top:996.3px;font-size:23px;line-height:23px;color:#000;letter-spacing:0.62px;">Calibration</div>
<div class="r" style="left:2005px;top:993px;width:19px;height:7px;border:1.5px solid #666;box-sizing:border-box;background:#fff;"></div>
<div class="r" style="left:2043px;top:993px;width:19px;height:19px;border:1.5px solid #666;box-sizing:border-box;background:#fff;"></div>
<div class="r" style="left:2043px;top:996px;width:19px;height:1.5px;background:#666;"></div>
<svg class="r" style="left:17px;top:1037px;" width="32" height="32" viewBox="0 0 32 32"><path d="M2 30 L5 20 L22 3 Q25 1 28 4 Q31 7 29 10 L12 27 Z" fill="#c8c8c8" stroke="#777" stroke-width="2"/><path d="M2 30 L5 20 L12 27 Z" fill="#e8e8e8" stroke="#777" stroke-width="1.5"/></svg>
<svg class="r" style="left:56px;top:1037px;" width="32" height="32" viewBox="0 0 32 32"><path d="M10 1 H20 V10 H29 V20 H20 V29 H10 V20 H1 V10 H10 Z" fill="#3ec03e" stroke="#1a7a2a" stroke-width="2"/></svg>
<svg class="r" style="left:95px;top:1037px;" width="32" height="32" viewBox="0 0 32 32"><path d="M10 1 H20 V10 H29 V20 H20 V29 H10 V20 H1 V10 H10 Z" fill="#3ec03e" stroke="#1a7a2a" stroke-width="2"/><text x="9" y="26" font-size="22" font-weight="bold" fill="#111" font-family="Liberation Sans">?</text></svg>
<svg class="r" style="left:136px;top:1039px;" width="30" height="30" viewBox="0 0 30 30"><path d="M4 4 L24 24 M24 4 L4 24" stroke="#a0a0a0" stroke-width="7" stroke-linecap="round"/></svg>
<svg class="r" style="left:173px;top:1037px;" width="32" height="32" viewBox="0 0 32 32"><text x="0" y="12" font-size="13" fill="#909090" font-family="Liberation Sans">V</text><path d="M11 4 Q18 3 18 10" stroke="#909090" stroke-width="1.5" fill="none"/><text x="7" y="27" font-size="14" fill="#909090" font-family="Liberation Sans">{T}</text></svg>
<svg class="r" style="left:212px;top:1037px;" width="30" height="32" viewBox="0 0 30 32"><path d="M1 1 H14 L18 5 V24 H1 Z" fill="#f4f4f4" stroke="#a8a8a8" stroke-width="1.5"/><path d="M9 7 H22 L27 12 V31 H9 Z" fill="#f4f4f4" stroke="#a8a8a8" stroke-width="1.8"/><path d="M13 16 H23 M13 20 H23 M13 24 H23" stroke="#a8a8a8" stroke-width="1.8"/></svg>
<svg class="r" style="left:252px;top:1037px;" width="30" height="32" viewBox="0 0 30 32"><rect x="1" y="5" width="22" height="26" rx="2" fill="#f4f4f4" stroke="#a8a8a8" stroke-width="1.8"/><rect x="7" y="1" width="10" height="6" fill="#f4f4f4" stroke="#a8a8a8" stroke-width="1.5"/><path d="M12 13 H28 V31 H12 Z" fill="#f4f4f4" stroke="#a8a8a8" stroke-width="1.8"/><path d="M16 19 H24 M16 24 H24" stroke="#a8a8a8" stroke-width="1.8"/></svg>
<svg class="r" style="left:299px;top:1037px;" width="32" height="32" viewBox="0 0 32 32"><rect x="1" y="1" width="13" height="13" fill="#f7d020" stroke="#6a5010" stroke-width="2"/><path d="M5 6 H9 M5 10 H10" stroke="#6a5010" stroke-width="1.5"/><path d="M16 6 Q22 6 22 12" stroke="#333" stroke-width="1.8" fill="none"/><path d="M13 17 L27 31 M27 17 L13 31" stroke="#2a9a2a" stroke-width="4.5"/></svg>
<svg class="r" style="left:338px;top:1037px;" width="30" height="32" viewBox="0 0 30 32"><path d="M1 3 L9 8 V31 L1 26 Z" fill="#3a7ac0" stroke="#1a3a7a" stroke-width="1.5"/><rect x="9" y="8" width="18" height="23" fill="#b8d4f0" stroke="#1a3a7a" stroke-width="2"/><path d="M13 14 H24 M13 19 H24 M13 24 H24" stroke="#1a3a7a" stroke-width="2"/></svg>
<svg class="r" style="left:382px;top:1037px;" width="34" height="32" viewBox="0 0 34 32"><path d="M3 30 L10 20 L16 26 Z" fill="#f8d840"/><path d="M10 20 L28 4 L32 8 L16 26 Z" fill="#a89a80" stroke="#6a5a40" stroke-width="1"/><path d="M0 31 H14" stroke="#f8d840" stroke-width="2"/></svg>
<svg class="r" style="left:430px;top:1037px;" width="34" height="32" viewBox="0 0 34 32"><path d="M3 30 L10 18 L16 24 Z" fill="#e8e8e8" stroke="#999" stroke-width="1.5"/><path d="M10 18 L26 4 Q29 2 31 5 L16 24 Z" fill="#f4f4f4" stroke="#999" stroke-width="1.8"/></svg>
<div class="r" style="left:468px;top:1032px;width:256px;height:37px;background:#fff;border:1px solid #7a7a7a;box-sizing:border-box;"></div>
<div class="t" style="left:477.0px;top:1040.9px;font-size:23px;line-height:23px;color:#000;letter-spacing:0.77px;">type filter text</div>
<div class="r" style="left:736px;top:1031px;width:63px;height:39px;background:#e1e1e1;border:1px solid #adadad;box-sizing:border-box;"></div>
<div class="t" style="left:738.0px;top:1040.9px;font-size:23px;line-height:23px;color:#000;letter-spacing:-0.08px;">Clear</div>
<svg class="r" style="left:815px;top:1039px;" width="26" height="30" viewBox="0 0 26 30"><path d="M3 1 V24 H18 M3 10 H10" fill="none" stroke="#3a6ab8" stroke-width="2"/><rect x="17" y="7" width="6" height="6" fill="#fff" stroke="#1a3a7a" stroke-width="1.8"/><rect x="17" y="20" width="6" height="6" fill="#fff" stroke="#1a3a7a" stroke-width="1.8"/></svg>
<svg class="r" style="left:853px;top:1038px;" width="30" height="31" viewBox="0 0 30 31"><path d="M5 4 V26 H20 M5 13 H12" fill="none" stroke="#3a6ab8" stroke-width="2"/><path d="M13 4 H19 M16 1 V7" stroke="#2a9a2a" stroke-width="2"/><path d="M22 4 H28" stroke="#d02020" stroke-width="2"/><rect x="19" y="10" width="6" height="6" fill="#fff" stroke="#1a3a7a" stroke-width="1.8"/><rect x="19" y="22" width="6" height="6" fill="#fff" stroke="#1a3a7a" stroke-width="1.8"/></svg>
<svg class="r" style="left:889px;top:1038px;" width="34" height="31" viewBox="0 0 34 31"><path d="M3 1 V17 H33" stroke="#1f4e8c" stroke-width="2" fill="none"/><path d="M4 10 Q12 0 18 8 Q24 15 32 14" stroke="#20a040" stroke-width="2" fill="none"/><path d="M4 12 Q20 10 31 2" stroke="#e02030" stroke-width="2" fill="none"/><text x="0" y="30" font-size="11" font-weight="bold" fill="#1f4e8c" font-family="Liberation Sans">SENS</text></svg>
<div class="t" style="left:946.5px;top:1044.9px;font-size:23px;line-height:23px;color:#000;letter-spacing:0.18px;">Variable Set: Default</div>
<svg class="r" style="left:1177px;top:1050px;" width="15" height="9" viewBox="0 0 15 9"><polygon points="0,0 15,0 7.5,8" fill="#222"/></svg>
<div class="r" style="left:13px;top:1087px;width:2066px;height:634px;background:#fff;"></div>
<div class="r" style="left:13px;top:1087px;width:1758px;height:39px;background:linear-gradient(#ffffff 0%, #f1f1ec 30%, #dcdcd5 65%, #c8c7bd 100%);"></div>
<div class="r" style="left:311px;top:1087px;width:1px;height:39px;background:#fff;"></div>
<div class="r" style="left:310px;top:1087px;width:1px;height:39px;background:#c8c8c2;"></div>
<div class="r" style="left:711px;top:1087px;width:1px;height:39px;background:#fff;"></div>
<div class="r" style="left:710px;top:1087px;width:1px;height:39px;background:#c8c8c2;"></div>
<div class="r" style="left:1111px;top:1087px;width:1px;height:39px;background:#fff;"></div>
<div class="r" style="left:1110px;top:1087px;width:1px;height:39px;background:#c8c8c2;"></div>
<div class="r" style="left:1311px;top:1087px;width:1px;height:39px;background:#fff;"></div>
<div class="r" style="left:1310px;top:1087px;width:1px;height:39px;background:#c8c8c2;"></div>
<div class="r" style="left:1472px;top:1087px;width:1px;height:39px;background:#fff;"></div>
<div class="r" style="left:1471px;top:1087px;width:1px;height:39px;background:#c8c8c2;"></div>
<div class="r" style="left:1770px;top:1087px;width:1px;height:39px;background:#c8c8c2;"></div>
<div class="t" style="left:23.0px;top:1095.8px;font-size:23px;line-height:23px;color:#000;letter-spacing:0.75px;">Name</div>
<div class="t" style="left:322.0px;top:1095.8px;font-size:23px;line-height:23px;color:#000;letter-spacing:0.85px;">Root Definition</div>
<div class="t" style="left:722.0px;top:1095.8px;font-size:23px;line-height:23px;color:#000;letter-spacing:0.67px;">Description</div>
<div class="t" style="left:1123.0px;top:1095.8px;font-size:23px;line-height:23px;color:#000;letter-spacing:0.08px;">Show In Tree</div>
<div class="t" style="left:1322.5px;top:1095.8px;font-size:23px;line-height:23px;color:#000;letter-spacing:1.00px;">Debug</div>
<div class="t" style="left:1482.0px;top:1095.8px;font-size:23px;line-height:23px;color:#000;letter-spacing:0.40px;">Category</div>
<div class="r" style="left:711px;top:1126px;width:1060px;height:40px;background:#ebebeb;"></div>
<div class="r" style="left:711px;top:1166px;width:1060px;height:40px;background:#ebebeb;"></div>
<div class="r" style="left:711px;top:1206px;width:1060px;height:40px;background:#ebebeb;"></div>
<div class="r" style="left:711px;top:1246px;width:1060px;height:40px;background:#ebebeb;"></div>
<div class="r" style="left:711px;top:1286px;width:1060px;height:40px;background:#ebebeb;"></div>
<div class="r" style="left:711px;top:1326px;width:1060px;height:40px;background:#ebebeb;"></div>
<div class="r" style="left:711px;top:1366px;width:1060px;height:40px;background:#ebebeb;"></div>
<div class="r" style="left:13px;top:1125px;width:2066px;height:1.3px;background:#d6d6d6;"></div>
<div class="r" style="left:13px;top:1165px;width:2066px;height:1.3px;background:#d6d6d6;"></div>
<div class="r" style="left:13px;top:1205px;width:2066px;height:1.3px;background:#d6d6d6;"></div>
<div class="r" style="left:13px;top:1245px;width:2066px;height:1.3px;background:#d6d6d6;"></div>
<div class="r" style="left:13px;top:1285px;width:2066px;height:1.3px;background:#d6d6d6;"></div>
<div class="r" style="left:13px;top:1325px;width:2066px;height:1.3px;background:#d6d6d6;"></div>
<div class="r" style="left:13px;top:1365px;width:2066px;height:1.3px;background:#d6d6d6;"></div>
<div class="r" style="left:13px;top:1405px;width:2066px;height:1.3px;background:#d6d6d6;"></div>
<div class="r" style="left:13px;top:1445px;width:2066px;height:1.3px;background:#d6d6d6;"></div>
<div class="r" style="left:13px;top:1485px;width:2066px;height:1.3px;background:#d6d6d6;"></div>
<div class="r" style="left:13px;top:1525px;width:2066px;height:1.3px;background:#d6d6d6;"></div>
<div class="r" style="left:13px;top:1565px;width:2066px;height:1.3px;background:#d6d6d6;"></div>
<div class="r" style="left:13px;top:1605px;width:2066px;height:1.3px;background:#d6d6d6;"></div>
<div class="r" style="left:13px;top:1645px;width:2066px;height:1.3px;background:#d6d6d6;"></div>
<div class="r" style="left:13px;top:1685px;width:2066px;height:1.3px;background:#d6d6d6;"></div>
<div class="r" style="left:311px;top:1126px;width:1.3px;height:595px;background:#d6d6d6;"></div>
<div class="r" style="left:711px;top:1126px;width:1.3px;height:595px;background:#d6d6d6;"></div>
<div class="r" style="left:1111px;top:1126px;width:1.3px;height:595px;background:#d6d6d6;"></div>
<div class="r" style="left:1311px;top:1126px;width:1.3px;height:595px;background:#d6d6d6;"></div>
<div class="r" style="left:1472px;top:1126px;width:1.3px;height:595px;background:#d6d6d6;"></div>
<div class="r" style="left:1771px;top:1126px;width:1.3px;height:595px;background:#d6d6d6;"></div>
<div class="t" style="left:38.0px;top:1136.3px;font-size:23px;line-height:23px;color:#000;letter-spacing:0.52px;">cFollowupAnnual</div>
<div class="t" style="left:322.0px;top:1136.3px;font-size:23px;line-height:23px;color:#000;letter-spacing:-1.29px;">2K</div>
<div class="t" style="left:722.0px;top:1136.3px;font-size:23px;line-height:23px;color:#000;letter-spacing:0.69px;">Cost of followup per year</div>
<svg class="r" style="left:1197px;top:1131px;" width="27" height="27" viewBox="0 0 27 27"><rect x="1.2" y="1.2" width="24.6" height="24.6" fill="#fff" stroke="#333" stroke-width="2.4"/><path d="M6 13 L11 19 L21 7" fill="none" stroke="#333" stroke-width="1.8"/></svg>
<svg class="r" style="left:1377px;top:1131px;" width="27" height="27" viewBox="0 0 27 27"><rect x="1.2" y="1.2" width="24.6" height="24.6" fill="#fff" stroke="#333" stroke-width="2.4"/></svg>
<div class="t" style="left:38.0px;top:1176.3px;font-size:23px;line-height:23px;color:#000;letter-spacing:0.23px;">cRadiation</div>
<div class="t" style="left:323.0px;top:1176.3px;font-size:23px;line-height:23px;color:#000;letter-spacing:-0.89px;">30K</div>
<div class="t" style="left:722.0px;top:1176.3px;font-size:23px;line-height:23px;color:#000;letter-spacing:0.66px;">Cost of radiation</div>
<svg class="r" style="left:1197px;top:1171px;" width="27" height="27" viewBox="0 0 27 27"><rect x="1.2" y="1.2" width="24.6" height="24.6" fill="#fff" stroke="#333" stroke-width="2.4"/><path d="M6 13 L11 19 L21 7" fill="none" stroke="#333" stroke-width="1.8"/></svg>
<svg class="r" style="left:1377px;top:1171px;" width="27" height="27" viewBox="0 0 27 27"><rect x="1.2" y="1.2" width="24.6" height="24.6" fill="#fff" stroke="#333" stroke-width="2.4"/></svg>
<div class="t" style="left:38.0px;top:1216.3px;font-size:23px;line-height:23px;color:#000;letter-spacing:-0.08px;">cSurgery</div>
<div class="t" style="left:323.0px;top:1216.3px;font-size:23px;line-height:23px;color:#000;letter-spacing:-0.89px;">50K</div>
<div class="t" style="left:722.0px;top:1216.3px;font-size:23px;line-height:23px;color:#000;letter-spacing:0.40px;">Cost of surgery</div>
<svg class="r" style="left:1197px;top:1211px;" width="27" height="27" viewBox="0 0 27 27"><rect x="1.2" y="1.2" width="24.6" height="24.6" fill="#fff" stroke="#333" stroke-width="2.4"/><path d="M6 13 L11 19 L21 7" fill="none" stroke="#333" stroke-width="1.8"/></svg>
<svg class="r" style="left:1377px;top:1211px;" width="27" height="27" viewBox="0 0 27 27"><rect x="1.2" y="1.2" width="24.6" height="24.6" fill="#fff" stroke="#333" stroke-width="2.4"/></svg>
<div class="t" style="left:38.0px;top:1256.3px;font-size:23px;line-height:23px;color:#000;letter-spacing:0.26px;">effEradicated</div>
<div class="t" style="left:322.0px;top:1256.3px;font-size:23px;line-height:23px;color:#000;letter-spacing:1.21px;">10</div>
<div class="t" style="left:722.0px;top:1256.3px;font-size:23px;line-height:23px;color:#000;letter-spacing:0.39px;">Life expectancy if tumor eradicat...</div>
<svg class="r" style="left:1197px;top:1251px;" width="27" height="27" viewBox="0 0 27 27"><rect x="1.2" y="1.2" width="24.6" height="24.6" fill="#fff" stroke="#333" stroke-width="2.4"/><path d="M6 13 L11 19 L21 7" fill="none" stroke="#333" stroke-width="1.8"/></svg>
<svg class="r" style="left:1377px;top:1251px;" width="27" height="27" viewBox="0 0 27 27"><rect x="1.2" y="1.2" width="24.6" height="24.6" fill="#fff" stroke="#333" stroke-width="2.4"/></svg>
<div class="t" style="left:38.0px;top:1296.3px;font-size:23px;line-height:23px;color:#000;letter-spacing:0.51px;">effNotEradicated</div>
<div class="t" style="left:323.0px;top:1296.3px;font-size:23px;line-height:23px;color:#000;letter-spacing:0.45px;">3</div>
<div class="t" style="left:722.0px;top:1296.3px;font-size:23px;line-height:23px;color:#000;letter-spacing:0.51px;">Life expectancy if tumor is not er...</div>
<svg class="r" style="left:1197px;top:1291px;" width="27" height="27" viewBox="0 0 27 27"><rect x="1.2" y="1.2" width="24.6" height="24.6" fill="#fff" stroke="#333" stroke-width="2.4"/><path d="M6 13 L11 19 L21 7" fill="none" stroke="#333" stroke-width="1.8"/></svg>
<svg class="r" style="left:1377px;top:1291px;" width="27" height="27" viewBox="0 0 27 27"><rect x="1.2" y="1.2" width="24.6" height="24.6" fill="#fff" stroke="#333" stroke-width="2.4"/></svg>
<div class="t" style="left:37.0px;top:1336.3px;font-size:23px;line-height:23px;color:#000;letter-spacing:-0.13px;">pEradicateRad</div>
<div class="t" style="left:323.0px;top:1336.3px;font-size:23px;line-height:23px;color:#000;letter-spacing:-0.29px;">0.6</div>
<div class="t" style="left:722.0px;top:1336.3px;font-size:23px;line-height:23px;color:#000;letter-spacing:0.38px;">Prob tumor is eradicated by radi...</div>
<svg class="r" style="left:1197px;top:1331px;" width="27" height="27" viewBox="0 0 27 27"><rect x="1.2" y="1.2" width="24.6" height="24.6" fill="#fff" stroke="#333" stroke-width="2.4"/><path d="M6 13 L11 19 L21 7" fill="none" stroke="#333" stroke-width="1.8"/></svg>
<svg class="r" style="left:1377px;top:1331px;" width="27" height="27" viewBox="0 0 27 27"><rect x="1.2" y="1.2" width="24.6" height="24.6" fill="#fff" stroke="#333" stroke-width="2.4"/></svg>
<div class="t" style="left:37.0px;top:1376.3px;font-size:23px;line-height:23px;color:#000;letter-spacing:-0.10px;">pEradicateRadSurg</div>
<div class="t" style="left:323.0px;top:1376.3px;font-size:23px;line-height:23px;color:#000;letter-spacing:-0.29px;">0.8</div>
<div class="t" style="left:722.0px;top:1376.3px;font-size:23px;line-height:23px;color:#000;letter-spacing:0.38px;">Prob tumor is eradicated by radi...</div>
<svg class="r" style="left:1197px;top:1371px;" width="27" height="27" viewBox="0 0 27 27"><rect x="1.2" y="1.2" width="24.6" height="24.6" fill="#fff" stroke="#333" stroke-width="2.4"/><path d="M6 13 L11 19 L21 7" fill="none" stroke="#333" stroke-width="1.8"/></svg>
<svg class="r" style="left:1377px;top:1371px;" width="27" height="27" viewBox="0 0 27 27"><rect x="1.2" y="1.2" width="24.6" height="24.6" fill="#fff" stroke="#333" stroke-width="2.4"/></svg>
<!--STATUS-->
<svg class="r" style="left:2059px;top:1738px;" width="4" height="30" viewBox="0 0 4 30"><rect x="0" y="0" width="3.5" height="3.5" fill="#a89f8a"/><rect x="0" y="8" width="3.5" height="3.5" fill="#a89f8a"/><rect x="0" y="16" width="3.5" height="3.5" fill="#a89f8a"/><rect x="0" y="24" width="3.5" height="3.5" fill="#a89f8a"/></svg>
<div class="r" style="left:2067px;top:1733px;width:294px;height:39px;border:1px solid #fff;box-sizing:border-box;"></div>
<div class="r" style="left:2069px;top:1735px;width:193px;height:35px;background:#a0a0a0;"></div>
<div class="r" style="left:2325px;top:1734px;width:1px;height:37px;background:#a0a0a0;"></div>
<div class="t" style="left:2121.5px;top:1744.0px;font-size:23px;line-height:23px;color:#000;letter-spacing:0.95px;">101M of 134M</div>
<svg class="r" style="left:2330px;top:1736px;" width="26" height="32" viewBox="0 0 26 32"><defs><linearGradient id="tg" x1="0" y1="0" x2="1" y2="0"><stop offset="0" stop-color="#1a5a9a"/><stop offset="0.5" stop-color="#e8f080"/><stop offset="1" stop-color="#1a5a9a"/></linearGradient></defs><rect x="8" y="0" width="9" height="3" fill="#1a6aa8"/><rect x="1" y="3" width="24" height="5" rx="2" fill="#2a7ab8"/><path d="M4 8 H22 L20 30 Q13 32 6 30 Z" fill="url(#tg)" stroke="#1a5a9a" stroke-width="1.5"/><path d="M9 10 V28 M13 10 V29 M17 10 V28" stroke="#1a5a9a" stroke-width="1.3"/></svg>
<svg class="r" style="left:2364px;top:1738px;" width="4" height="30" viewBox="0 0 4 30"><rect x="0" y="0" width="3.5" height="3.5" fill="#a89f8a"/><rect x="0" y="8" width="3.5" height="3.5" fill="#a89f8a"/><rect x="0" y="16" width="3.5" height="3.5" fill="#a89f8a"/><rect x="0" y="24" width="3.5" height="3.5" fill="#a89f8a"/></svg>
<!--ANNOT-->
<svg class="r" style="left:0px;top:0px;mix-blend-mode:multiply;" width="700" height="300" viewBox="0 0 700 300"><path d="M218 154 C 226 150, 232 148.5, 240 148 C 280 147, 320 147, 350 150 C 380 154, 420 158, 450 160 C 490 162, 515 164, 530 168 C 540 172, 543 178, 543 186 L 543 196 C 543 200, 535 202, 520 203 C 490 205, 460 207, 440 211 C 410 217, 385 223, 365 226 C 340 228, 300 226, 270 222 C 240 218, 215 212, 195 204 C 187 200, 186 194, 187 186 L 188 174 C 190 168, 200 162, 218 154 Z M 238 191 C 270 194, 330 196, 394 194.5 C 370 197, 340 201, 300 200.5 C 270 200, 250 196, 238 191 Z" fill="#fff400" fill-rule="evenodd"/></svg>
<svg class="r" style="left:0px;top:0px;mix-blend-mode:multiply;" width="3006" height="300" viewBox="0 0 3006 300"><path d="M2471 196 C 2470 186, 2471 178, 2474 172 C 2480 162, 2492 154, 2504 150 C 2520 145, 2540 143, 2580 142.5 C 2595 142.5, 2605 145, 2609 151 C 2612 158, 2612 165, 2612 175 L 2612 188 C 2611 198, 2607 205, 2598 208 C 2585 209.5, 2560 209, 2539 209.5 C 2537 213, 2533 216, 2526 216.5 L 2504 216.5 C 2493 215, 2485 210, 2479 205 C 2474 202, 2471 200, 2471 196 Z" fill="#fff400"/></svg>
<svg class="r" style="left:0px;top:900px;mix-blend-mode:multiply;" width="400" height="200" viewBox="0 0 400 200"><g transform="translate(0,-900)"><path d="M301 991 H309 V1004 C 318 1006, 326 1010, 329 1016 C 332 1024, 332.5 1034, 332.5 1048 L 332.5 1060 C 332 1070, 330 1078, 326 1082 C 322 1086, 316 1087, 310 1087 C 302 1084, 296 1079, 292 1072 C 289 1066, 288 1058, 288 1045 L 288 1025 C 288 1015, 291 1008, 301 1004 Z" fill="#fff400"/></g></svg>
<svg class="r" style="left:0px;top:0px;pointer-events:none;" width="3006" height="1780" viewBox="0 0 3006 1780"><path d="M2513 509.5 L2731 507" fill="none" stroke="#e31b23" stroke-width="7.2" stroke-linecap="round" stroke-linejoin="round"/><path d="M2546 487 C 2535 493, 2526 497, 2520 502 C 2516 505, 2514 508, 2513 509.5 C 2520 512, 2530 518, 2540 526 C 2546 531, 2552 534, 2558.5 536" fill="none" stroke="#e31b23" stroke-width="7.2" stroke-linecap="round" stroke-linejoin="round"/><path d="M2809 480.5 C 2818 472, 2826 463, 2832.5 456 C 2833 470, 2833 490, 2835.5 512" fill="none" stroke="#e31b23" stroke-width="7.2" stroke-linecap="round" stroke-linejoin="round"/><path d="M2820 514.5 L2864 515" fill="none" stroke="#e31b23" stroke-width="7.2" stroke-linecap="round" stroke-linejoin="round"/><path d="M271 1131.5 C 285 1120, 298 1106, 307 1092 C 310 1105, 318 1125, 326 1136.5" fill="none" stroke="#e31b23" stroke-width="7.2" stroke-linecap="round" stroke-linejoin="round"/><path d="M307 1092 C 307 1120, 305 1160, 303 1175 C 300 1200, 296 1250, 294 1300 C 292 1330, 288 1350, 283 1375 C 277 1400, 273 1420, 273.2 1436.5" fill="none" stroke="#e31b23" stroke-width="6.8" stroke-linecap="round" stroke-linejoin="round"/><path d="M260 1478 C 262 1470, 268 1462, 277 1462 C 287 1462, 293 1470, 293 1480 C 293 1490, 282 1495, 272 1499 C 263 1503, 262 1510, 264.5 1516 C 275 1515, 290 1511, 304 1520" fill="none" stroke="#e31b23" stroke-width="6.8" stroke-linecap="round" stroke-linejoin="round"/></svg>
</body></html>
